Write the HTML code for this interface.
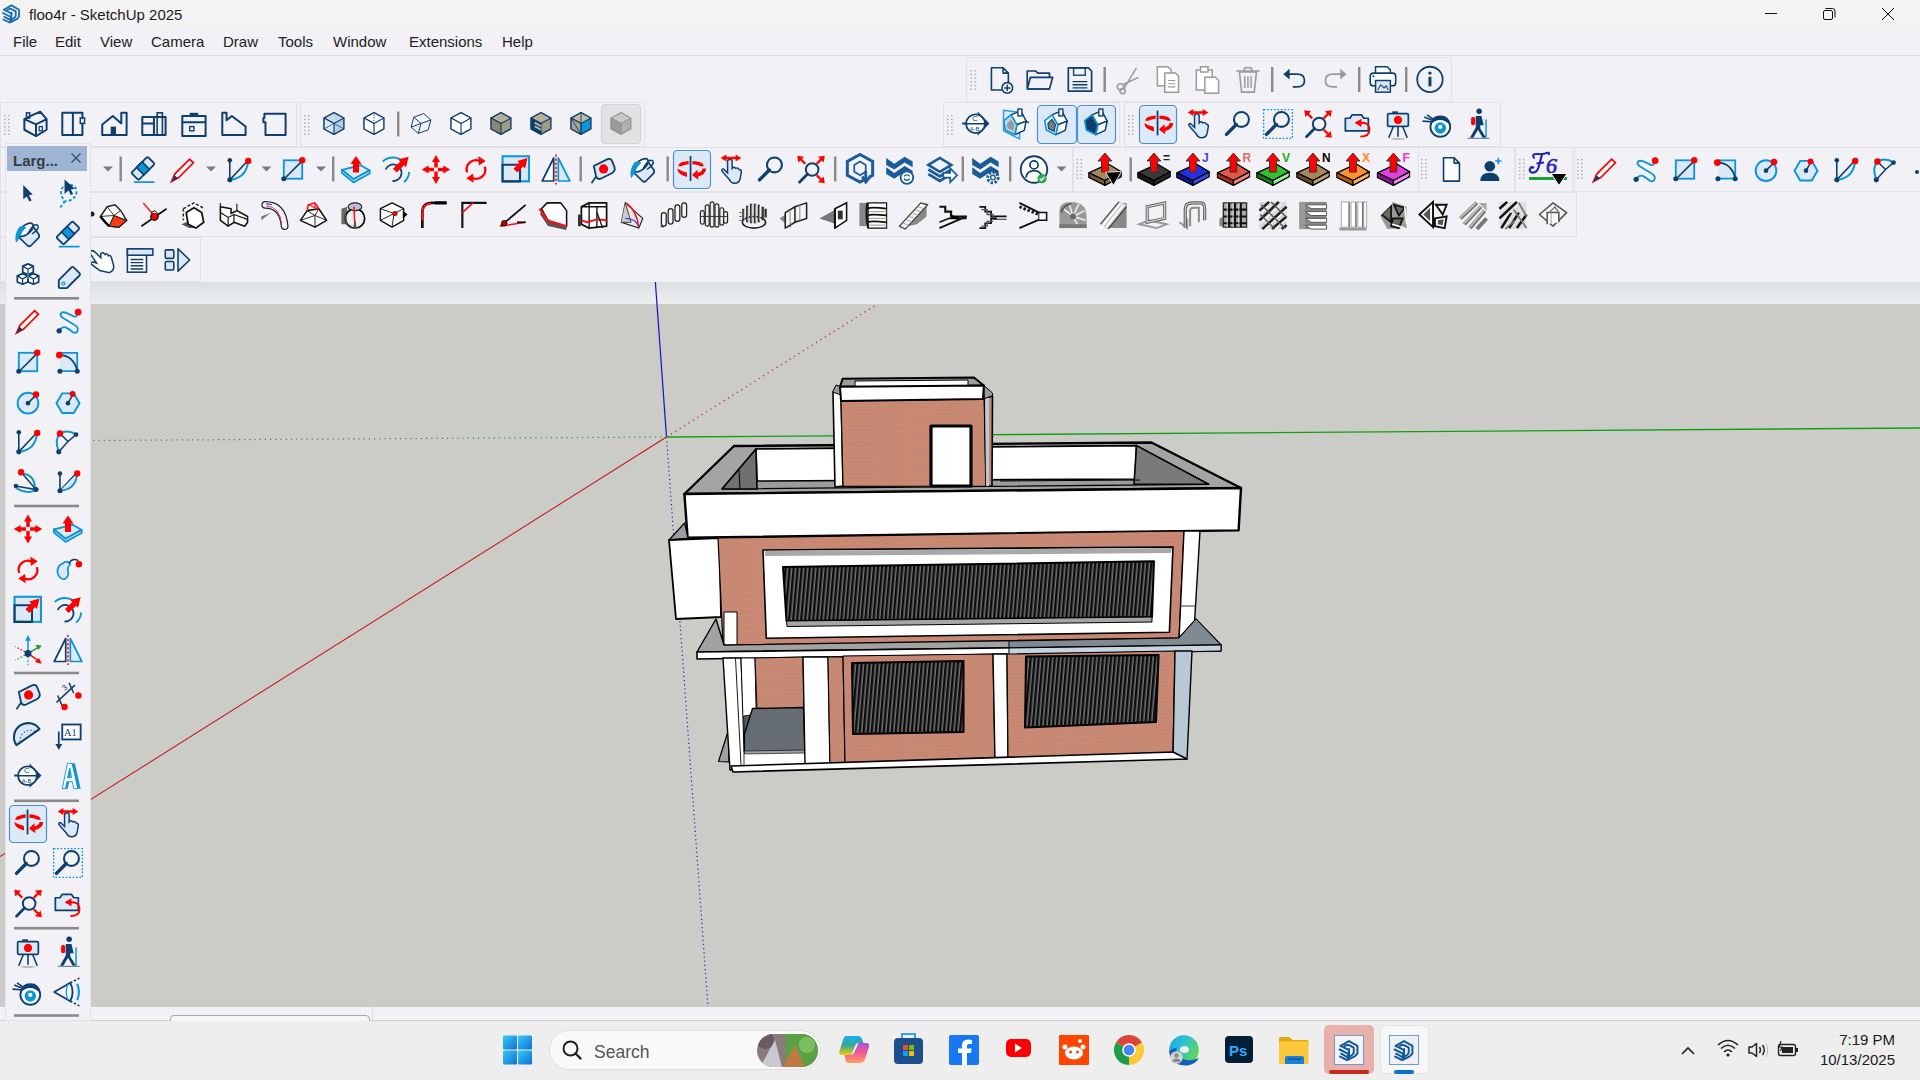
<!DOCTYPE html>
<html><head><meta charset="utf-8">
<style>
html,body{margin:0;padding:0;}
body{width:1920px;height:1080px;overflow:hidden;position:relative;background:#f1f1f6;font-family:"Liberation Sans",sans-serif;}
.abs{position:absolute;}
#title{left:0;top:0;width:1920px;height:29px;background:#f3f3f3;}
#title .t{left:29px;top:6px;font-size:15px;color:#1b1b1b;white-space:nowrap;}
#menu{left:0;top:29px;width:1920px;height:26px;background:#f1f1f6;border-bottom:1px solid #dcdce2;}
#menu span{position:absolute;top:4px;font-size:15px;color:#222;white-space:nowrap;}
#vp{left:0;top:282px;width:1920px;height:725px;background:#cbccc7;}
#vpgrad{left:0;top:282px;width:1920px;height:22px;background:linear-gradient(#dde0e2,#eceef0);}
#status{left:0;top:1007px;width:1920px;height:13px;background:#f1f1f6;border-bottom:1px solid #cfcfd2;}
#taskbar{left:0;top:1021px;width:1920px;height:59px;background:#eeeeee;}
svg{overflow:visible}
</style></head>
<body>
<div id="title" class="abs"><div class="abs t">floo4r - SketchUp 2025</div></div>
<div id="menu" class="abs">
<span style="left:13px">File</span><span style="left:55px">Edit</span><span style="left:100px">View</span><span style="left:151px">Camera</span><span style="left:223px">Draw</span><span style="left:278px">Tools</span><span style="left:333px">Window</span><span style="left:409px">Extensions</span><span style="left:502px">Help</span>
</div>
<div id="vp" class="abs"></div>
<div id="vpgrad" class="abs"></div>
<div id="status" class="abs"></div>
<div id="taskbar" class="abs"></div>
<svg class="abs" style="left:0;top:0" width="1920" height="1080" viewBox="0 0 1920 1080">
<defs><symbol id="i_arc" viewBox="0 0 32 32"><line x1="8" y1="8" x2="8" y2="25" stroke="#0f3f6f" stroke-width="1.4"/><line x1="8" y1="25" x2="23" y2="9" stroke="#0f3f6f" stroke-width="1.4"/><path d="M8 25 Q22 24 24 9" fill="none" stroke="#0c96d8" stroke-width="1.7"/><circle cx="8" cy="8" r="2" fill="#0f3f6f"/><circle cx="8" cy="25" r="2.2" fill="#0f3f6f"/><circle cx="24" cy="8.5" r="2.8" fill="#ff0000"/></symbol><symbol id="i_arc2" viewBox="0 0 32 32"><path d="M9 9 L9 24 L23 9" fill="none" stroke="#0f3f6f" stroke-width="1.4"/><path d="M9 24 Q23 23 24 9" fill="#dbe8f5" stroke="#0c96d8" stroke-width="1.7"/><circle cx="9" cy="9" r="2" fill="#0f3f6f"/><circle cx="9" cy="24" r="2.2" fill="#0f3f6f"/><circle cx="24" cy="9" r="2.8" fill="#ff0000"/></symbol><symbol id="i_arc3" viewBox="0 0 32 32"><path d="M8 25 Q4 14 9 9 Q16 5 23 10" fill="none" stroke="#0c96d8" stroke-width="1.7"/><path d="M8 25 L16 16 L23 10 M16 16 L9 9" fill="none" stroke="#0f3f6f" stroke-width="1.3"/><circle cx="8" cy="25" r="2.2" fill="#0f3f6f"/><circle cx="23" cy="10" r="2" fill="#0f3f6f"/><circle cx="9" cy="9" r="2.8" fill="#ff0000"/></symbol><symbol id="i_axes" viewBox="0 0 32 32"><line x1="16" y1="19" x2="16" y2="5" stroke="#0c96d8" stroke-width="1.3"/><path d="M16 3 L18.5 8 L13.5 8 Z" fill="#0c96d8"/><line x1="16" y1="19" x2="26" y2="13" stroke="#2a9a2a" stroke-width="1.3"/><path d="M28 12 L22.5 11.5 L25 16 Z" fill="#2a9a2a"/><line x1="16" y1="19" x2="26" y2="26" stroke="#ff0000" stroke-width="1.3"/><path d="M28 28 L22 26.5 L25.5 23 Z" fill="#ff0000"/><line x1="16" y1="19" x2="5" y2="13" stroke="#ff0000" stroke-width="1" stroke-dasharray="1.5 1.5"/><line x1="16" y1="19" x2="5" y2="25" stroke="#2a9a2a" stroke-width="1" stroke-dasharray="1.5 1.5"/><line x1="16" y1="19" x2="16" y2="29" stroke="#0c96d8" stroke-width="1" stroke-dasharray="1.5 1.5"/><circle cx="16" cy="19" r="3" fill="#0f3f6f"/></symbol><symbol id="i_circle" viewBox="0 0 32 32"><circle cx="16" cy="17" r="9" fill="#dbe8f5" stroke="#0c96d8" stroke-width="1.7"/><line x1="16" y1="17" x2="23" y2="10" stroke="#0f3f6f" stroke-width="1.3"/><circle cx="16" cy="17" r="2" fill="#0f3f6f"/><circle cx="23" cy="9.5" r="2.8" fill="#ff0000"/></symbol><symbol id="i_component" viewBox="0 0 32 32"><path d="M16 5.9 L20.6 7.832000000000001 L20.6 13.168 L16 15.1 L11.4 13.168 L11.4 7.832000000000001 Z" fill="#ffffff" stroke="#0f3f6f" stroke-width="1.5" stroke-linejoin="round"/><path d="M11.4 7.832000000000001 L16 10.5 L20.6 7.832000000000001 M16 10.5 L16 15.1" fill="none" stroke="#0f3f6f" stroke-width="1.1"/><path d="M11.3 14.4 L15.9 16.332 L15.9 21.668 L11.3 23.6 L6.700000000000001 21.668 L6.700000000000001 16.332 Z" fill="#ffffff" stroke="#0f3f6f" stroke-width="1.5" stroke-linejoin="round"/><path d="M6.700000000000001 16.332 L11.3 19 L15.9 16.332 M11.3 19 L11.3 23.6" fill="none" stroke="#0f3f6f" stroke-width="1.1"/><path d="M20.7 14.4 L25.299999999999997 16.332 L25.299999999999997 21.668 L20.7 23.6 L16.1 21.668 L16.1 16.332 Z" fill="#ffffff" stroke="#0f3f6f" stroke-width="1.5" stroke-linejoin="round"/><path d="M16.1 16.332 L20.7 19 L25.299999999999997 16.332 M20.7 19 L20.7 23.6" fill="none" stroke="#0f3f6f" stroke-width="1.1"/><line x1="16" y1="11" x2="16" y2="19" stroke="#6f8fb0" stroke-width="1.1"/></symbol><symbol id="i_copy" viewBox="0 0 32 32"><path d="M6 4 L16 4 L19 7 L19 22 L6 22 Z" fill="#ffffff" stroke="#9a9a9a" stroke-width="1.4"/><path d="M13 10 L23 10 L26 13 L26 28 L13 28 Z" fill="#ffffff" stroke="#9a9a9a" stroke-width="1.4"/><path d="M16 17 L23 17 M16 20 L23 20 M16 23 L23 23" stroke="#9a9a9a" stroke-width="1"/></symbol><symbol id="i_cut" viewBox="0 0 32 32"><circle cx="9" cy="23" r="3" fill="none" stroke="#9a9a9a" stroke-width="1.4"/><circle cx="11" cy="27" r="2.5" fill="none" stroke="#9a9a9a" stroke-width="1.4"/><path d="M11 21 L26 14 M12 25 L24 5" stroke="#9a9a9a" stroke-width="1.4"/></symbol><symbol id="i_delete" viewBox="0 0 32 32"><path d="M8 9 L24 9 L22 28 L10 28 Z" fill="none" stroke="#9a9a9a" stroke-width="1.5"/><path d="M5 8 L27 8 M12 8 L13 5 L19 5 L20 8 M13 13 L13 24 M16 13 L16 24 M19 13 L19 24" stroke="#9a9a9a" stroke-width="1.4" fill="none"/></symbol><symbol id="i_dimension" viewBox="0 0 32 32"><path d="M6 22 L22 7" stroke="#0f3f6f" stroke-width="1.3"/><path d="M7 16 L11 25 M17 5 L21 14" stroke="#0f3f6f" stroke-width="1.3"/><text x="12" y="12" font-size="7" fill="#0f3f6f" font-family="Liberation Mono" transform="rotate(-40 13 11)">3</text><circle cx="25" cy="16" r="2.8" fill="#ff0000"/><circle cx="13" cy="26" r="2.8" fill="#ff0000"/></symbol><symbol id="i_eraser" viewBox="0 0 32 32"><g transform="rotate(-45 16 15)"><rect x="6" y="10.5" width="20" height="9" rx="1.5" fill="#dbe8f5" stroke="#0f3f6f" stroke-width="1.6"/><rect x="12.5" y="10.5" width="7" height="9" fill="#0c96d8" stroke="#0f3f6f" stroke-width="1.4"/></g><line x1="8" y1="27" x2="26" y2="27" stroke="#0c96d8" stroke-width="1.5"/></symbol><symbol id="i_flip" viewBox="0 0 32 32"><path d="M14 6 L14 26 L4 26 Z" fill="#ffffff" stroke="#0f3f6f" stroke-width="1.5" stroke-linejoin="round"/><path d="M18 6 L28 26 L18 26 Z" fill="#dbe8f5" stroke="#0c96d8" stroke-width="1.5" stroke-linejoin="round"/><line x1="16" y1="3" x2="16" y2="29" stroke="#ff0000" stroke-width="1.3" stroke-dasharray="2 1.5"/></symbol><symbol id="i_followme" viewBox="0 0 32 32"><path d="M12 10 Q6 12 7 19 Q9 24 13 24 Q17 22 16 17 Q15 14 18 11 Q15 7 12 10 Z" fill="#dbe8f5" stroke="#0c96d8" stroke-width="1.5"/><path d="M17 10 Q20 5 25 8" fill="none" stroke="#0f3f6f" stroke-width="1.4"/><circle cx="25.5" cy="11" r="2.8" fill="#ff0000"/></symbol><symbol id="i_fov" viewBox="0 0 32 32"><path d="M4 16 L18 8 Q22 16 18 24 Z" fill="none" stroke="#0f3f6f" stroke-width="1.6" stroke-linejoin="round"/><path d="M16 9 Q13 16 16 23" fill="none" stroke="#0c96d8" stroke-width="1"/><path d="M18 8 L26 4 M18 24 L26 28" stroke="#0f3f6f" stroke-width="1.3" stroke-dasharray="2 1.5"/><path d="M24 9 Q27 16 24 23" fill="none" stroke="#0c96d8" stroke-width="1.8"/></symbol><symbol id="i_freehand" viewBox="0 0 32 32"><path d="M8.5 24 Q11 20.5 14 21.5 Q17 23 20 25.5 Q23.5 27.5 24.5 24 Q25 21 21 19 L13.5 14.5 Q9 12 9.5 10 Q10.5 7.5 14.5 9 Q18 10.5 21 12 Q23.5 13 24.5 9.5" fill="none" stroke="#0c96d8" stroke-width="1.6"/><circle cx="8.3" cy="24.5" r="2.3" fill="#0f3f6f"/><circle cx="24.8" cy="8.3" r="2.9" fill="#ff0000"/></symbol><symbol id="i_hand" viewBox="0 0 32 32"><path d="M4 8 Q6 6 9 9 L14 14 L14 10 Q16 8 18 11 Q20 9 21 12 Q23 11 24 14 L26 21 Q27 26 22 28 L13 26 L5 20 Q4 18 7 18 L10 19 L4 10 Z" fill="#ffffff" stroke="#0f3f6f" stroke-width="1.4"/></symbol><symbol id="i_info" viewBox="0 0 32 32"><circle cx="16" cy="16" r="12" fill="none" stroke="#0f3f6f" stroke-width="1.7"/><circle cx="16" cy="10" r="1.6" fill="#0f3f6f"/><rect x="14.6" y="13.5" width="2.8" height="9" fill="#0f3f6f"/></symbol><symbol id="i_jpp0" viewBox="0 0 32 32"><path d="M0.8 19.3 L19.2 10.8 L31.4 18.3 L16 26.4 Z" fill="#a88a5a" stroke="#000" stroke-width="1.2" stroke-linejoin="round"/><path d="M0.8 19.3 L0.8 23.5 L16 31 L16 26.4 Z" fill="#7a5a30" stroke="#000" stroke-width="1.2" stroke-linejoin="round"/><path d="M16 26.4 L16 31 L31.4 22.8 L31.4 18.3 Z" fill="#8d6c3e" stroke="#000" stroke-width="1.2" stroke-linejoin="round"/><path d="M16 0.5 L22.5 8 L19.2 8 L19.2 18.5 L12.8 18.5 L12.8 8 L9.5 8 Z" fill="#ff0000" stroke="#333" stroke-width="0.9" stroke-linejoin="round"/><path d="M16.5 18.6 L31.5 18 L24 31 Z" fill="#000" stroke="#fff" stroke-width="0.8"/></symbol><symbol id="i_jpp1" viewBox="0 0 32 32"><path d="M0.8 19.3 L19.2 10.8 L31.4 18.3 L16 26.4 Z" fill="#3a3a3a" stroke="#000" stroke-width="1.2" stroke-linejoin="round"/><path d="M0.8 19.3 L0.8 23.5 L16 31 L16 26.4 Z" fill="#1a1a1a" stroke="#000" stroke-width="1.2" stroke-linejoin="round"/><path d="M16 26.4 L16 31 L31.4 22.8 L31.4 18.3 Z" fill="#262626" stroke="#000" stroke-width="1.2" stroke-linejoin="round"/><path d="M16 0.5 L22.5 8 L19.2 8 L19.2 18.5 L12.8 18.5 L12.8 8 L9.5 8 Z" fill="#ff0000" stroke="#333" stroke-width="0.9" stroke-linejoin="round"/><text x="24.5" y="8.5" font-size="11.5" font-weight="bold" fill="#222" font-family="Liberation Sans">=</text></symbol><symbol id="i_jpp2" viewBox="0 0 32 32"><path d="M0.8 19.3 L19.2 10.8 L31.4 18.3 L16 26.4 Z" fill="#2232e0" stroke="#000" stroke-width="1.2" stroke-linejoin="round"/><path d="M0.8 19.3 L0.8 23.5 L16 31 L16 26.4 Z" fill="#0a1890" stroke="#000" stroke-width="1.2" stroke-linejoin="round"/><path d="M16 26.4 L16 31 L31.4 22.8 L31.4 18.3 Z" fill="#3a48f0" stroke="#000" stroke-width="1.2" stroke-linejoin="round"/><path d="M16 0.5 L22.5 8 L19.2 8 L19.2 18.5 L12.8 18.5 L12.8 8 L9.5 8 Z" fill="#ff0000" stroke="#333" stroke-width="0.9" stroke-linejoin="round"/><text x="24.5" y="8.5" font-size="11.5" font-weight="bold" fill="#4646e6" font-family="Liberation Sans">J</text></symbol><symbol id="i_jpp3" viewBox="0 0 32 32"><path d="M0.8 19.3 L19.2 10.8 L31.4 18.3 L16 26.4 Z" fill="#e05848" stroke="#000" stroke-width="1.2" stroke-linejoin="round"/><path d="M0.8 19.3 L0.8 23.5 L16 31 L16 26.4 Z" fill="#b02a20" stroke="#000" stroke-width="1.2" stroke-linejoin="round"/><path d="M16 26.4 L16 31 L31.4 22.8 L31.4 18.3 Z" fill="#f08878" stroke="#000" stroke-width="1.2" stroke-linejoin="round"/><path d="M16 0.5 L22.5 8 L19.2 8 L19.2 18.5 L12.8 18.5 L12.8 8 L9.5 8 Z" fill="#ff0000" stroke="#333" stroke-width="0.9" stroke-linejoin="round"/><text x="24.5" y="8.5" font-size="11.5" font-weight="bold" fill="#e86a5a" font-family="Liberation Sans">R</text></symbol><symbol id="i_jpp4" viewBox="0 0 32 32"><path d="M0.8 19.3 L19.2 10.8 L31.4 18.3 L16 26.4 Z" fill="#30c030" stroke="#000" stroke-width="1.2" stroke-linejoin="round"/><path d="M0.8 19.3 L0.8 23.5 L16 31 L16 26.4 Z" fill="#108010" stroke="#000" stroke-width="1.2" stroke-linejoin="round"/><path d="M16 26.4 L16 31 L31.4 22.8 L31.4 18.3 Z" fill="#a0f0a0" stroke="#000" stroke-width="1.2" stroke-linejoin="round"/><path d="M16 0.5 L22.5 8 L19.2 8 L19.2 18.5 L12.8 18.5 L12.8 8 L9.5 8 Z" fill="#ff0000" stroke="#333" stroke-width="0.9" stroke-linejoin="round"/><text x="24.5" y="8.5" font-size="11.5" font-weight="bold" fill="#22aa22" font-family="Liberation Sans">V</text></symbol><symbol id="i_jpp5" viewBox="0 0 32 32"><path d="M0.8 19.3 L19.2 10.8 L31.4 18.3 L16 26.4 Z" fill="#a88858" stroke="#000" stroke-width="1.2" stroke-linejoin="round"/><path d="M0.8 19.3 L0.8 23.5 L16 31 L16 26.4 Z" fill="#6a4a20" stroke="#000" stroke-width="1.2" stroke-linejoin="round"/><path d="M16 26.4 L16 31 L31.4 22.8 L31.4 18.3 Z" fill="#c0a070" stroke="#000" stroke-width="1.2" stroke-linejoin="round"/><path d="M16 0.5 L22.5 8 L19.2 8 L19.2 18.5 L12.8 18.5 L12.8 8 L9.5 8 Z" fill="#ff0000" stroke="#333" stroke-width="0.9" stroke-linejoin="round"/><text x="24.5" y="8.5" font-size="11.5" font-weight="bold" fill="#000" font-family="Liberation Sans">N</text></symbol><symbol id="i_jpp6" viewBox="0 0 32 32"><path d="M0.8 19.3 L19.2 10.8 L31.4 18.3 L16 26.4 Z" fill="#ff9030" stroke="#000" stroke-width="1.2" stroke-linejoin="round"/><path d="M0.8 19.3 L0.8 23.5 L16 31 L16 26.4 Z" fill="#c05a00" stroke="#000" stroke-width="1.2" stroke-linejoin="round"/><path d="M16 26.4 L16 31 L31.4 22.8 L31.4 18.3 Z" fill="#ffb060" stroke="#000" stroke-width="1.2" stroke-linejoin="round"/><path d="M16 0.5 L22.5 8 L19.2 8 L19.2 18.5 L12.8 18.5 L12.8 8 L9.5 8 Z" fill="#ff0000" stroke="#333" stroke-width="0.9" stroke-linejoin="round"/><text x="24.5" y="8.5" font-size="11.5" font-weight="bold" fill="#ff8a20" font-family="Liberation Sans">X</text></symbol><symbol id="i_jpp7" viewBox="0 0 32 32"><path d="M0.8 19.3 L19.2 10.8 L31.4 18.3 L16 26.4 Z" fill="#e040e0" stroke="#000" stroke-width="1.2" stroke-linejoin="round"/><path d="M0.8 19.3 L0.8 23.5 L16 31 L16 26.4 Z" fill="#9a109a" stroke="#000" stroke-width="1.2" stroke-linejoin="round"/><path d="M16 26.4 L16 31 L31.4 22.8 L31.4 18.3 Z" fill="#f888f8" stroke="#000" stroke-width="1.2" stroke-linejoin="round"/><path d="M16 0.5 L22.5 8 L19.2 8 L19.2 18.5 L12.8 18.5 L12.8 8 L9.5 8 Z" fill="#ff0000" stroke="#333" stroke-width="0.9" stroke-linejoin="round"/><text x="24.5" y="8.5" font-size="11.5" font-weight="bold" fill="#ee30ee" font-family="Liberation Sans">F</text></symbol><symbol id="i_lasso" viewBox="0 0 32 32"><path d="M9 27 C13 25 13 22 12 20 C9 16 9 10 14 8 C20 6 25 10 23 16 C21 21 16 22 12 22" fill="none" stroke="#0c96d8" stroke-width="1.6" stroke-dasharray="2.6 1.8"/><path d="M13 3 L22 11 L18.5 11.6 L20.5 15.6 L18.5 16.6 L16.5 12.6 L13 15.5 Z" fill="#0f3f6f"/></symbol><symbol id="i_lookaround" viewBox="0 0 32 32"><circle cx="18" cy="18.5" r="8.6" fill="#ffffff" stroke="#0f3f6f" stroke-width="1.6"/><path d="M9 17 Q10 8.5 18 8.5 Q26 8.5 27 17 Q22 12.5 18 12.5 Q13 12.5 9 17 Z" fill="#0f3f6f"/><circle cx="18" cy="19.5" r="5" fill="#0c96d8"/><circle cx="18" cy="18.5" r="1.8" fill="#ffffff"/><path d="M2.5 13.5 L10 14 M4 10 L10.5 12.5 M6.5 8 L11.5 11.5" stroke="#0f3f6f" stroke-width="1.4"/></symbol><symbol id="i_move" viewBox="0 0 32 32"><path d="M17.50 14.20 L17.50 9.40 L19.50 9.40 L16.00 3.40 L12.50 9.40 L14.50 9.40 L14.50 14.20 Z" fill="#ff0000"/><path d="M14.50 17.80 L14.50 22.60 L12.50 22.60 L16.00 28.60 L19.50 22.60 L17.50 22.60 L17.50 17.80 Z" fill="#ff0000"/><path d="M14.20 14.50 L9.60 14.50 L9.60 12.50 L3.60 16.00 L9.60 19.50 L9.60 17.50 L14.20 17.50 Z" fill="#ff0000"/><path d="M17.80 17.50 L22.40 17.50 L22.40 19.50 L28.40 16.00 L22.40 12.50 L22.40 14.50 L17.80 14.50 Z" fill="#ff0000"/></symbol><symbol id="i_new" viewBox="0 0 32 32"><path d="M7 5 L18 5 L23 10 L23 26 L7 26 Z M18 5 L18 10 L23 10" fill="none" stroke="#0f3f6f" stroke-width="1.5" stroke-linejoin="round"/><circle cx="22" cy="24" r="5" fill="#ffffff" stroke="#0f3f6f" stroke-width="1.5"/><path d="M22 21 L22 27 M19 24 L25 24" stroke="#0f3f6f" stroke-width="1.5"/></symbol><symbol id="i_offset" viewBox="0 0 32 32"><path d="M7 16 A7.2 7.2 0 1 1 13 26" fill="none" stroke="#0f3f6f" stroke-width="1.6" transform="rotate(0)"/><path d="M4.5 9 A13.6 13.6 0 0 1 25 12 M27.5 18 A13.6 13.6 0 0 1 23 27" fill="none" stroke="#0c96d8" stroke-width="1.6"/><path d="M16.63 18.63 L22.97 12.28 L24.70 14.02 L27.00 5.00 L17.98 7.30 L19.72 9.03 L13.37 15.37 Z" fill="#ff0000"/></symbol><symbol id="i_open" viewBox="0 0 32 32"><path d="M4 25 L4 8 L12 8 L14 10 L25 10 L25 14 M4 25 L7 14 L28 14 L25 25 Z" fill="none" stroke="#0f3f6f" stroke-width="1.6" stroke-linejoin="round"/><path d="M5 25 L25 25" stroke="#0f3f6f" stroke-width="1.6"/></symbol><symbol id="i_orbit" viewBox="0 0 32 32"><path d="M6.4 13.2 A9.6 3.2 0 0 1 25.6 13.2" fill="none" stroke="#ff0000" stroke-width="3"/><path d="M4.2 15.2 L4.6 17.5 Q6 20.5 12.6 22.6 L12.4 18.6 Q7 17.4 4.2 15.2 Z" fill="#ff0000"/><path d="M27.6 15.2 Q27.6 19.6 20.5 21" fill="none" stroke="#ff0000" stroke-width="3.2"/><path d="M21.6 16.2 L16.6 20.8 L22.4 25 Z" fill="#ff0000"/><line x1="15.6" y1="4.8" x2="15.6" y2="25.3" stroke="#dceaf8" stroke-width="3.2"/><line x1="15.6" y1="4.8" x2="15.6" y2="25.3" stroke="#0f3f6f" stroke-width="1.5" stroke-linecap="round"/></symbol><symbol id="i_outliner" viewBox="0 0 32 32"><rect x="7" y="6" width="18" height="22" fill="#ffffff" stroke="#0f3f6f" stroke-width="1.5"/><rect x="7" y="6" width="24" height="6" fill="#dbe8f5" stroke="#0f3f6f" stroke-width="1.5"/><path d="M10 16 L22 16 M10 19 L22 19 M10 22 L22 22 M10 25 L22 25" stroke="#0f3f6f" stroke-width="1.3"/></symbol><symbol id="i_page" viewBox="0 0 32 32"><path d="M9 5 L19 5 L24 10 L24 27 L9 27 Z M19 5 L19 10 L24 10" fill="#ffffff" stroke="#0f3f6f" stroke-width="1.5" stroke-linejoin="round"/></symbol><symbol id="i_paint" viewBox="0 0 32 32"><path d="M8 15 Q6.5 17 8 18.8 L15.5 26 Q17 27.3 18.6 26 L25 19.6 Q26.4 18 25.3 16.2 L20.5 9.5" fill="#dbe8f5" stroke="#0f3f6f" stroke-width="1.5" stroke-linejoin="round"/><ellipse cx="14.2" cy="12.3" rx="7.6" ry="3.9" transform="rotate(-40 14.2 12.3)" fill="#ffffff" stroke="#0f3f6f" stroke-width="1.5"/><path d="M16 15.5 Q21 6 24.5 8.5 Q26.5 11 19.5 16" fill="none" stroke="#0f3f6f" stroke-width="1.3"/><path d="M8.6 9.6 Q3.6 16.5 5.6 23.5 Q7.8 21.5 9.3 17.6 Q10.8 13.6 14.6 10.2 Q11 8.5 8.6 9.6 Z" fill="#0c96d8"/></symbol><symbol id="i_pan" viewBox="0 0 32 32"><path d="M14 24 Q10 20 8 17 Q8 15 10 16 L13 19 L13 9 Q13 7 15 7 Q17 7 17 9 L17 15 Q19 13 20 15 Q22 14 23 16 Q25 16 25 18 L24 24 Q23 28 19 28 Q16 28 14 24 Z" fill="#dbe8f5" stroke="#0f3f6f" stroke-width="1.3"/><path d="M7 6 L12 3 L12 9 Z M25 6 L20 3 L20 9 Z" fill="#ff0000"/><line x1="10" y1="6" x2="22" y2="6" stroke="#ff0000" stroke-width="2"/></symbol><symbol id="i_paste" viewBox="0 0 32 32"><path d="M6 7 L21 7 L21 26 L6 26 Z" fill="#ffffff" stroke="#9a9a9a" stroke-width="1.4"/><rect x="10" y="4" width="7" height="5" fill="#ffffff" stroke="#9a9a9a" stroke-width="1.4"/><path d="M14 14 L24 14 L27 17 L27 29 L14 29 Z" fill="#ffffff" stroke="#9a9a9a" stroke-width="1.4"/></symbol><symbol id="i_pencil" viewBox="0 0 32 32"><path d="M6 26.5 L9 19.8 L21.8 7 L25 10.2 L12.2 23 Z" fill="#ffffff" stroke="#ff0000" stroke-width="1.5" stroke-linejoin="miter"/><path d="M6 26.5 L8.6 20.8 L11.7 23.9 Z" fill="#0f3f6f"/></symbol><symbol id="i_person" viewBox="0 0 32 32"><circle cx="14" cy="13" r="5" fill="#0f3f6f"/><path d="M5 27 Q5 19 14 19 Q23 19 23 27 Z" fill="#0f3f6f"/><path d="M22 5 L22 11 M19 8 L25 8" stroke="#0c96d8" stroke-width="1.5"/></symbol><symbol id="i_pie" viewBox="0 0 32 32"><path d="M9 9 Q22 9 22 22" fill="none" stroke="#0c96d8" stroke-width="1.7"/><path d="M5 20 L23 23 L11 9" fill="none" stroke="#0f3f6f" stroke-width="1.3"/><path d="M6 22 Q14 27 22 24" fill="none" stroke="#0c96d8" stroke-width="1.7"/><circle cx="5.5" cy="20" r="2" fill="#0f3f6f"/><circle cx="23" cy="23" r="2.2" fill="#0f3f6f"/><circle cx="10" cy="8" r="2.8" fill="#ff0000"/></symbol><symbol id="i_polygon" viewBox="0 0 32 32"><path d="M11 8.5 L21 8.5 L26 17 L21 25.5 L11 25.5 L6 17 Z" fill="#dbe8f5" stroke="#0c96d8" stroke-width="1.7"/><line x1="16" y1="17" x2="20" y2="10" stroke="#0f3f6f" stroke-width="1.3"/><circle cx="16" cy="17" r="2" fill="#0f3f6f"/><circle cx="20" cy="9" r="2.6" fill="#ff0000"/></symbol><symbol id="i_poscam" viewBox="0 0 32 32"><rect x="7" y="7" width="18" height="11" rx="1" fill="#dbe8f5" stroke="#0f3f6f" stroke-width="1.5"/><rect x="11" y="5" width="5" height="2" fill="#0f3f6f"/><path d="M12 18 L8 28 M16 18 L16 27 M20 18 L24 28" stroke="#0f3f6f" stroke-width="1.4"/><ellipse cx="16" cy="29" rx="6" ry="1" fill="#bbb"/><circle cx="16" cy="12.5" r="3.6" fill="#ff0000"/></symbol><symbol id="i_prev" viewBox="0 0 32 32"><path d="M5 11 L9 11 L11 8 L19 8 L21 11 L25 11 L25 22 L5 22 Z" fill="#dbe8f5" stroke="#0f3f6f" stroke-width="1.5" stroke-linejoin="round"/><path d="M17 15 Q26 14 26 21 Q26 27 18 27" fill="none" stroke="#ff0000" stroke-width="1.6"/><path d="M13 15 L19 11.5 L19 18.5 Z" fill="#ff0000"/></symbol><symbol id="i_print" viewBox="0 0 32 32"><path d="M9 10 L9 4 L20 4 L23 7 L23 10" fill="#ffffff" stroke="#0f3f6f" stroke-width="1.4"/><rect x="4" y="10" width="24" height="12" rx="3" fill="#ffffff" stroke="#0f3f6f" stroke-width="1.5"/><rect x="9" y="17" width="14" height="11" fill="#dbe8f5" stroke="#0f3f6f" stroke-width="1.4"/><path d="M11 26 L14 21 L17 24 L19 22 L21 26" fill="none" stroke="#0f3f6f" stroke-width="1"/><circle cx="7" cy="13" r="1" fill="#0f3f6f"/></symbol><symbol id="i_profile" viewBox="0 0 32 32"><circle cx="16" cy="16" r="11.5" fill="#ffffff" stroke="#0f3f6f" stroke-width="1.6"/><circle cx="16" cy="12" r="3.5" fill="none" stroke="#0f3f6f" stroke-width="1.5"/><path d="M9 23 Q10 17 16 17 Q22 17 23 23" fill="none" stroke="#0f3f6f" stroke-width="1.5"/><circle cx="23" cy="24" r="4" fill="#2aa84a"/><path d="M21 24 L22.5 25.5 L25 22.5" fill="none" stroke="#ffffff" stroke-width="1.2"/></symbol><symbol id="i_protractor" viewBox="0 0 32 32"><path d="M6 24 L26 10 A12 12 0 0 0 6 24 Z" fill="#dbe8f5" stroke="#0f3f6f" stroke-width="1.8" stroke-linejoin="round"/><path d="M9 21 A9 9 0 0 1 22 12" fill="none" stroke="#0f3f6f" stroke-width="1" stroke-dasharray="1 2"/></symbol><symbol id="i_pushpull" viewBox="0 0 32 32"><path d="M3.8 16.3 L20.2 12.3 L27.9 16.8 L13.8 24.5 Z" fill="#dbe8f5" stroke="#0c96d8" stroke-width="1.6" stroke-linejoin="round"/><path d="M3.8 16.3 L3.8 19 L13.8 27.2 L27.9 19.5 L27.9 16.8 L13.8 24.5 Z" fill="#dbe8f5" stroke="#0c96d8" stroke-width="1.6" stroke-linejoin="round"/><path d="M18.60 18.50 L18.60 11.30 L20.75 11.30 L16.00 4.30 L11.25 11.30 L13.40 11.30 L13.40 18.50 Z" fill="#ff0000"/></symbol><symbol id="i_rect" viewBox="0 0 32 32"><rect x="8" y="8" width="16" height="16" fill="#dbe8f5" stroke="#0c96d8" stroke-width="1.6"/><line x1="8.5" y1="24" x2="24" y2="8.5" stroke="#0f3f6f" stroke-width="1.4"/><circle cx="8" cy="24" r="2.2" fill="#0f3f6f"/><circle cx="24" cy="8" r="2.8" fill="#ff0000"/></symbol><symbol id="i_redo" viewBox="0 0 32 32"><path d="M22 11 L14 11 Q7 11 7 17 Q7 23 14 23 L18 23" fill="none" stroke="#9a9a9a" stroke-width="1.6"/><path d="M27 11 L21 6 L21 16 Z" fill="#9a9a9a"/></symbol><symbol id="i_rotate" viewBox="0 0 32 32"><path d="M8.3 18.5 A8 8 0 0 1 19 8.6" fill="none" stroke="#ff0000" stroke-width="2"/><path d="M23.7 13.5 A8 8 0 0 1 13 23.4" fill="none" stroke="#ff0000" stroke-width="2"/><path d="M18 4.5 L24.5 8.5 L18.5 12.5 Z" fill="#ff0000"/><path d="M14 27.5 L7.5 23.5 L13.5 19.5 Z" fill="#ff0000"/></symbol><symbol id="i_rotrect" viewBox="0 0 32 32"><path d="M9 8 L24 8 L24 24 L9 24" fill="#dbe8f5" stroke="#0c96d8" stroke-width="1.6"/><path d="M9 10 Q20 10 24 23" fill="none" stroke="#0f3f6f" stroke-width="1.5"/><circle cx="8.5" cy="10" r="3" fill="#ff0000"/><circle cx="9" cy="24" r="2.2" fill="#0f3f6f"/><circle cx="24" cy="24" r="2.2" fill="#0f3f6f"/></symbol><symbol id="i_s_back" viewBox="0 0 32 32"><path d="M16 4 L27 10 L27 22 L16 28 L5 22 L5 10 Z" fill="#ffffff" stroke="#0f3f6f" stroke-width="1.6" stroke-linejoin="round"/><path d="M5 10 L16 16 L27 10 L16 4 Z" fill="#ffffff" stroke="#0f3f6f" stroke-width="1.2800000000000002" stroke-linejoin="round"/><path d="M5 10 L16 16 L16 28 L5 22 Z" fill="#ffffff" stroke="#0f3f6f" stroke-width="1.2800000000000002" stroke-linejoin="round"/><path d="M16 6 L16 16" stroke="#0f3f6f" stroke-width="1" stroke-dasharray="1.5 1.5"/></symbol><symbol id="i_s_gray" viewBox="0 0 32 32"><path d="M16 4 L27 10 L27 22 L16 28 L5 22 L5 10 Z" fill="#b0b0b0" stroke="#8c8c8c" stroke-width="1.2" stroke-linejoin="round"/><path d="M5 10 L16 16 L27 10 L16 4 Z" fill="#c8c8c8" stroke="#8c8c8c" stroke-width="0.96" stroke-linejoin="round"/><path d="M5 10 L16 16 L16 28 L5 22 Z" fill="#9a9a9a" stroke="#8c8c8c" stroke-width="0.96" stroke-linejoin="round"/></symbol><symbol id="i_s_hidden" viewBox="0 0 32 32"><path d="M16 4 L27 10 L27 22 L16 28 L5 22 L5 10 Z" fill="#ffffff" stroke="#0f3f6f" stroke-width="1.6" stroke-linejoin="round"/><path d="M5 10 L16 16 L27 10 L16 4 Z" fill="#ffffff" stroke="#0f3f6f" stroke-width="1.2800000000000002" stroke-linejoin="round"/><path d="M5 10 L16 16 L16 28 L5 22 Z" fill="#ffffff" stroke="#0f3f6f" stroke-width="1.2800000000000002" stroke-linejoin="round"/></symbol><symbol id="i_s_mono" viewBox="0 0 32 32"><path d="M16 4 L27 10 L27 22 L16 28 L5 22 L5 10 Z" fill="#0c96d8" stroke="#0f3f6f" stroke-width="1.6" stroke-linejoin="round"/><path d="M5 10 L16 16 L27 10 L16 4 Z" fill="#c0bca2" stroke="#0f3f6f" stroke-width="1.2800000000000002" stroke-linejoin="round"/><path d="M5 10 L16 16 L16 28 L5 22 Z" fill="#a9a58c" stroke="#0f3f6f" stroke-width="1.2800000000000002" stroke-linejoin="round"/><path d="M16 4 L16 28 L5 10" fill="none" stroke="#0f3f6f" stroke-width="1"/></symbol><symbol id="i_s_shaded" viewBox="0 0 32 32"><path d="M16 4 L27 10 L27 22 L16 28 L5 22 L5 10 Z" fill="#a09c82" stroke="#0f3f6f" stroke-width="1.6" stroke-linejoin="round"/><path d="M5 10 L16 16 L27 10 L16 4 Z" fill="#b5b09a" stroke="#0f3f6f" stroke-width="1.2800000000000002" stroke-linejoin="round"/><path d="M5 10 L16 16 L16 28 L5 22 Z" fill="#8b876d" stroke="#0f3f6f" stroke-width="1.2800000000000002" stroke-linejoin="round"/></symbol><symbol id="i_s_tex" viewBox="0 0 32 32"><path d="M16 4 L27 10 L27 22 L16 28 L5 22 L5 10 Z" fill="#a09c82" stroke="#0f3f6f" stroke-width="1.6" stroke-linejoin="round"/><path d="M5 10 L16 16 L27 10 L16 4 Z" fill="#b5b09a" stroke="#0f3f6f" stroke-width="1.2800000000000002" stroke-linejoin="round"/><path d="M5 10 L16 16 L16 28 L5 22 Z" fill="#0f3f6f" stroke="#0f3f6f" stroke-width="1.2800000000000002" stroke-linejoin="round"/><path d="M9 15 L16 19 M9 19 L16 23" stroke="#c0bca0" stroke-width="2"/></symbol><symbol id="i_s_wire" viewBox="0 0 32 32"><path d="M8 9 L19 5 L27 12 L24 23 L13 27 L5 20 Z M8 9 L16 16 L27 12 M16 16 L13 27 M5 20 L16 16" fill="none" stroke="#0f3f6f" stroke-width="1.1"/></symbol><symbol id="i_s_xray" viewBox="0 0 32 32"><path d="M16 4 L27 10 L27 22 L16 28 L5 22 L5 10 Z" fill="#b5cde3" stroke="#0f3f6f" stroke-width="1.6" stroke-linejoin="round"/><path d="M5 10 L16 16 L27 10 L16 4 Z" fill="#c5d8ea" stroke="#0f3f6f" stroke-width="1.2800000000000002" stroke-linejoin="round"/><path d="M5 10 L16 16 L16 28 L5 22 Z" fill="#dbe8f5" stroke="#0f3f6f" stroke-width="1.2800000000000002" stroke-linejoin="round"/><path d="M5 22 L16 16 L27 22" fill="none" stroke="#0f3f6f" stroke-width="0.8"/></symbol><symbol id="i_save" viewBox="0 0 32 32"><path d="M5 5 L24 5 L27 8 L27 27 L5 27 Z" fill="none" stroke="#0f3f6f" stroke-width="1.6" stroke-linejoin="round"/><rect x="10" y="5" width="11" height="7" fill="none" stroke="#0f3f6f" stroke-width="1.3"/><path d="M9 18 L23 18 M9 21 L23 21 M9 24 L23 24" stroke="#0f3f6f" stroke-width="1.3"/></symbol><symbol id="i_scale" viewBox="0 0 32 32"><rect x="4.3" y="4.5" width="23" height="21.8" fill="#dbe8f5" stroke="#0c96d8" stroke-width="1.8"/><path d="M4.3 11.8 L19.5 11.8 L19.5 26.3 L4.3 26.3 Z" fill="none" stroke="#0f3f6f" stroke-width="1.8"/><path d="M17.16 18.59 L22.14 13.37 L23.91 15.07 L26.00 6.00 L17.04 8.51 L18.81 10.20 L13.84 15.41 Z" fill="#ff0000"/></symbol><symbol id="i_scenes" viewBox="0 0 32 32"><rect x="5" y="7" width="8" height="8" rx="1" fill="#dbe8f5" stroke="#0f3f6f" stroke-width="1.5"/><rect x="5" y="18" width="8" height="8" rx="1" fill="#dbe8f5" stroke="#0f3f6f" stroke-width="1.5"/><path d="M17 6 L28 16.5 L17 27 Z" fill="#dbe8f5" stroke="#0f3f6f" stroke-width="1.5" stroke-linejoin="round"/></symbol><symbol id="i_sec_cut" viewBox="0 0 32 32"><path d="M12.5 8.1 L21 4.5 L25.7 13.5 L17.6 16.7 Z" fill="#ffffff" stroke="#0f3f6f" stroke-width="1.3" stroke-linejoin="round"/><path d="M17.6 16.7 L25.7 13.5 L24 21.5 L15.8 25.3 Z" fill="#ffffff" stroke="#0f3f6f" stroke-width="1.3" stroke-linejoin="round"/><rect x="18.5" y="3" width="3.5" height="6" fill="#ffffff" stroke="#0f3f6f" stroke-width="1.2"/><path d="M12.5 8.1 L6.2 13 L7.6 21.2 L15.8 25.3 L17.6 16.7 Z" fill="#eef4fa" stroke="#0c96d8" stroke-width="1.4" stroke-linejoin="round"/><path d="M9 15.5 L12.5 12 L15.5 16.5 L14.5 22.5 L9.5 20 Z" fill="#777d84" stroke="#0f3f6f" stroke-width="1"/></symbol><symbol id="i_sec_disp" viewBox="0 0 32 32"><path d="M6 4 L20 6 L20 29 L6 22 Z" fill="#dbe8f5" stroke="#0c96d8" stroke-width="1.2" opacity="0.9"/><path d="M12.5 8.1 L21 4.5 L25.7 13.5 L17.6 16.7 Z" fill="#ffffff" stroke="#0f3f6f" stroke-width="1.3" stroke-linejoin="round"/><path d="M17.6 16.7 L25.7 13.5 L24 21.5 L15.8 25.3 Z" fill="#ffffff" stroke="#0f3f6f" stroke-width="1.3" stroke-linejoin="round"/><rect x="18.5" y="3" width="3.5" height="6" fill="#ffffff" stroke="#0f3f6f" stroke-width="1.2"/><path d="M12.5 8.1 L6.2 13 L7.6 21.2 L15.8 25.3 L17.6 16.7 Z" fill="#c9d3dc" stroke="#0c96d8" stroke-width="1.4" stroke-linejoin="round"/><path d="M9 16 L12.5 12 L15.5 16.5 L14.5 22 L9.5 19.5 Z" fill="#8e99a4"/><path d="M25.7 13.5 L28 15" stroke="#0f3f6f" stroke-width="1.2"/></symbol><symbol id="i_sec_fill" viewBox="0 0 32 32"><path d="M12.5 8.1 L21 4.5 L25.7 13.5 L17.6 16.7 Z" fill="#ffffff" stroke="#0f3f6f" stroke-width="1.3" stroke-linejoin="round"/><path d="M17.6 16.7 L25.7 13.5 L24 21.5 L15.8 25.3 Z" fill="#ffffff" stroke="#0f3f6f" stroke-width="1.3" stroke-linejoin="round"/><rect x="18.5" y="3" width="3.5" height="6" fill="#ffffff" stroke="#0f3f6f" stroke-width="1.2"/><path d="M12.5 8.1 L6.2 13 L7.6 21.2 L15.8 25.3 L17.6 16.7 Z" fill="#0f3f6f" stroke="#0c96d8" stroke-width="1.4" stroke-linejoin="round"/></symbol><symbol id="i_sec_plane" viewBox="0 0 32 32"><path d="M17.4 5.2 L27.7 15.6 L17.4 26.2 Z" fill="#0f3f6f"/><line x1="4" y1="15.6" x2="18" y2="15.6" stroke="#0f3f6f" stroke-width="1.6"/><circle cx="15.6" cy="15.8" r="8.2" fill="#ffffff" stroke="#0f3f6f" stroke-width="1.6"/><line x1="7.4" y1="15.8" x2="23.8" y2="15.8" stroke="#0f3f6f" stroke-width="1.4"/><text x="12.6" y="13.8" font-size="7" fill="#0f3f6f" font-family="Liberation Sans">C</text><text x="10.6" y="22" font-size="5" fill="#0f3f6f" font-family="Liberation Sans">A-B</text></symbol><symbol id="i_section" viewBox="0 0 32 32"><path d="M17.4 5.2 L27.7 15.6 L17.4 26.2 Z" fill="#0f3f6f"/><line x1="4" y1="15.6" x2="18" y2="15.6" stroke="#0f3f6f" stroke-width="1.6"/><circle cx="15.6" cy="15.8" r="8.2" fill="#ffffff" stroke="#0f3f6f" stroke-width="1.6"/><line x1="7.4" y1="15.8" x2="23.8" y2="15.8" stroke="#0f3f6f" stroke-width="1.4"/><text x="12.6" y="13.8" font-size="7" fill="#0f3f6f" font-family="Liberation Sans">C</text><text x="10.6" y="22" font-size="5" fill="#0f3f6f" font-family="Liberation Sans">A-B</text></symbol><symbol id="i_select" viewBox="0 0 32 32"><path d="M11 6 L21 16 L17 16.8 L19.8 22.2 L17.4 23.4 L14.8 18 L11 21 Z" fill="#0f3f6f"/></symbol><symbol id="i_tag" viewBox="0 0 32 32"><path d="M8 20 L19 9 Q20 8 21 9 L26 14 Q27 15 26 16 L15 27 L9 27 Q8 27 8 26 Z" fill="#dbe8f5" stroke="#0f3f6f" stroke-width="1.6" stroke-linejoin="round"/><circle cx="12" cy="23" r="1.3" fill="none" stroke="#0c96d8" stroke-width="1"/></symbol><symbol id="i_tape" viewBox="0 0 32 32"><path d="M8 13 L20 7 Q23 6 24 9 L26 14 Q27 17 24 19 L14 24 Q11 25 10 22 Z" fill="#dbe8f5" stroke="#0f3f6f" stroke-width="1.6" stroke-linejoin="round"/><path d="M10 22 L6 28" stroke="#0f3f6f" stroke-width="1.5"/><circle cx="16.5" cy="15.5" r="4" fill="#ff0000"/></symbol><symbol id="i_text" viewBox="0 0 32 32"><rect x="11" y="6" width="16" height="13" fill="#ffffff" stroke="#0f3f6f" stroke-width="1.6"/><text x="12.5" y="16" font-size="9" fill="#0f3f6f" font-family="Liberation Serif">A1</text><path d="M8 12 L8 27" stroke="#0f3f6f" stroke-width="1.5"/><path d="M5 23 L8 28 L11 23 Z" fill="#0f3f6f"/></symbol><symbol id="i_text3d" viewBox="0 0 32 32"><path d="M13 27 L17.5 5 L22 5 L27 27 L23.2 27 L22 21 L17 21 L15.8 27 Z M17.8 17.5 L21.3 17.5 L19.6 9 Z" fill="#0c96d8"/><path d="M11 27 L15.5 5 L19.5 5 L24.5 27 L21 27 L19.8 21 L15 21 L13.8 27 Z M15.6 17.5 L19.2 17.5 L17.5 9 Z" fill="#ffffff" stroke="#0c96d8" stroke-width="0.8"/></symbol><symbol id="i_undo" viewBox="0 0 32 32"><path d="M10 11 L18 11 Q25 11 25 17 Q25 23 18 23 L14 23" fill="none" stroke="#0f3f6f" stroke-width="1.6"/><path d="M5 11 L11 6 L11 16 Z" fill="#0f3f6f"/></symbol><symbol id="i_v_back" viewBox="0 0 32 32"><path d="M5 8 L27 8 L27 27 L5 27 Z M5 14 L27 14" fill="none" stroke="#0f3f6f" stroke-width="1.9" stroke-linejoin="round"/><rect x="12" y="5" width="8" height="3" fill="#0f3f6f"/><rect x="12" y="18" width="4" height="4" fill="none" stroke="#0f3f6f" stroke-width="1.3"/></symbol><symbol id="i_v_bottom" viewBox="0 0 32 32"><path d="M7 6 L27 6 L27 26 L8 26 L8 14 L6 14 L6 10 L7 10 Z" fill="none" stroke="#0f3f6f" stroke-width="1.9" stroke-linejoin="round"/></symbol><symbol id="i_v_front" viewBox="0 0 32 32"><path d="M4 26 L4 16 L14 8 L22 15 L22 5 L27 5 L27 26 Z" fill="none" stroke="#0f3f6f" stroke-width="1.9" stroke-linejoin="round"/><rect x="12" y="18" width="5" height="8" fill="#0f3f6f"/></symbol><symbol id="i_v_iso" viewBox="0 0 32 32"><path d="M6 11 L14 7 L21 4 L27 11 L27 21 L17 27 L6 21 Z M6 11 L17 16 L27 11 M17 16 L17 27" fill="none" stroke="#0f3f6f" stroke-width="1.9" stroke-linejoin="round"/><rect x="8" y="5" width="3" height="5" fill="none" stroke="#0f3f6f" stroke-width="1.4"/><rect x="20" y="18" width="3" height="4" fill="none" stroke="#0f3f6f" stroke-width="1.2"/></symbol><symbol id="i_v_left" viewBox="0 0 32 32"><path d="M5 26 L5 5 L9 5 L9 12 L14 8 L27 18 L27 26 Z" fill="none" stroke="#0f3f6f" stroke-width="1.9" stroke-linejoin="round"/></symbol><symbol id="i_v_right" viewBox="0 0 32 32"><path d="M5 26 L5 9 L27 9 L27 26 Z M16 9 L16 26 M5 15 L16 15" fill="none" stroke="#0f3f6f" stroke-width="1.9" stroke-linejoin="round"/><rect x="19" y="5" width="5" height="21" fill="none" stroke="#0f3f6f" stroke-width="1.5"/></symbol><symbol id="i_v_top" viewBox="0 0 32 32"><path d="M5 5 L24 5 L24 26 L5 26 Z M15 5 L15 26" fill="none" stroke="#0f3f6f" stroke-width="1.9" stroke-linejoin="round"/><rect x="22" y="10" width="4" height="5" fill="#ffffff" stroke="#0f3f6f" stroke-width="1.5"/></symbol><symbol id="i_walk" viewBox="0 0 32 32"><circle cx="17" cy="5" r="2.4" fill="#0f3f6f"/><path d="M14 9 L19 9 L21 17 L18 17 L18 20 L23 28 L20 28 L16 21 L12 28 L9 28 L14 19 Z" fill="#0f3f6f"/><rect x="10" y="10" width="3.5" height="7" rx="1.5" fill="#ff0000"/><line x1="23" y1="12" x2="23" y2="28" stroke="#0c96d8" stroke-width="1.3"/><line x1="7" y1="28.5" x2="26" y2="28.5" stroke="#6b8bab" stroke-width="1.2"/></symbol><symbol id="i_wh1" viewBox="0 0 32 32"><path d="M16 3 L27 9 L27 21 L16 27 L5 21 L5 9 Z" fill="none" stroke="#1a5c9a" stroke-width="2.6"/><path d="M16 9 L21 12 L21 18 L16 21 L11 18 L11 12 Z" fill="none" stroke="#1a5c9a" stroke-width="1.5"/><path d="M21 17 L21 25 M18 22 L21 27 L25 22" fill="#ffffff" stroke="#1a5c9a" stroke-width="2.4"/></symbol><symbol id="i_wh2" viewBox="0 0 32 32"><path d="M4 6 L11 11 L20 5 L27 9 L27 14 L20 10 L11 16 L4 12 Z M4 14 L11 19 L20 13 L27 17 L27 22 L20 18 L11 24 L4 20 Z" fill="#1a5c9a"/><circle cx="22" cy="23" r="5.5" fill="#ffffff" stroke="#1a5c9a" stroke-width="1.6"/><path d="M19.5 22 A3 3 0 0 1 24.5 22 M24.5 24 A3 3 0 0 1 19.5 24" fill="none" stroke="#1a5c9a" stroke-width="1.2"/></symbol><symbol id="i_wh3" viewBox="0 0 32 32"><path d="M5 12 L15 6 L25 12 L15 18 Z" fill="none" stroke="#1a5c9a" stroke-width="2.2"/><path d="M5 16 L15 22 L25 16 M5 20 L15 26 L25 20" fill="none" stroke="#1a5c9a" stroke-width="2.4"/><path d="M18 19 L24 19 L24 15 L30 21 L24 27 L24 23 L18 23 Z" fill="#ffffff" stroke="#1a5c9a" stroke-width="1.5"/></symbol><symbol id="i_wh4" viewBox="0 0 32 32"><path d="M4 6 L11 11 L20 5 L27 9 L27 14 L20 10 L11 16 L4 12 Z M4 14 L11 19 L20 13 L27 17 L27 22 L20 18 L11 24 L4 20 Z" fill="#1a5c9a"/><circle cx="22" cy="23" r="4.5" fill="#ffffff" stroke="#1a5c9a" stroke-width="2.6" stroke-dasharray="2 1.4"/><circle cx="22" cy="23" r="2" fill="#ffffff" stroke="#1a5c9a" stroke-width="1.2"/></symbol><symbol id="i_zoom" viewBox="0 0 32 32"><circle cx="19" cy="12" r="6.5" fill="none" stroke="#0f3f6f" stroke-width="1.8"/><line x1="14.5" y1="16.5" x2="6" y2="25" stroke="#0f3f6f" stroke-width="3" stroke-linecap="round"/></symbol><symbol id="i_zoomext" viewBox="0 0 32 32"><circle cx="17" cy="16" r="5.5" fill="none" stroke="#0f3f6f" stroke-width="1.7"/><line x1="13" y1="20" x2="6" y2="27" stroke="#0f3f6f" stroke-width="2.4" stroke-linecap="round"/><g fill="#ff0000"><path d="M4 4 L10 5 L5 10 Z"/><path d="M28 4 L22 5 L27 10 Z"/><path d="M28 28 L22 27 L27 22 Z"/></g><path d="M6 6 L11 11 M26 6 L21 11 M26 26 L21 21" stroke="#ff0000" stroke-width="2"/></symbol><symbol id="i_zoomwin" viewBox="0 0 32 32"><circle cx="19" cy="12" r="6.5" fill="none" stroke="#0f3f6f" stroke-width="1.8"/><line x1="14.5" y1="16.5" x2="6" y2="25" stroke="#0f3f6f" stroke-width="3" stroke-linecap="round"/><rect x="3.5" y="3.5" width="25" height="25" fill="none" stroke="#0c96d8" stroke-width="1.2" stroke-dasharray="1.5 1.5"/></symbol><linearGradient id="winblue" x1="0" y1="0" x2="1" y2="1"><stop offset="0" stop-color="#3ccaf7"/><stop offset="1" stop-color="#0a6fd6"/></linearGradient><linearGradient id="cop1" x1="0" y1="0" x2="0" y2="1"><stop offset="0" stop-color="#1ab0f5"/><stop offset="0.5" stop-color="#3aa88a"/><stop offset="1" stop-color="#f0cc10"/></linearGradient><linearGradient id="cop2" x1="0" y1="0" x2="0" y2="1"><stop offset="0" stop-color="#b050e0"/><stop offset="0.5" stop-color="#f05a90"/><stop offset="1" stop-color="#fca060"/></linearGradient><linearGradient id="edgeg" x1="0" y1="0" x2="1" y2="0.6"><stop offset="0" stop-color="#1c9ae8"/><stop offset="0.45" stop-color="#2cc0d8"/><stop offset="1" stop-color="#60d850"/></linearGradient><linearGradient id="skyg" x1="0" y1="0" x2="0" y2="1"><stop offset="0" stop-color="#dde0e2"/><stop offset="1" stop-color="#eceef0"/></linearGradient></defs>
<g transform="translate(1.5 3.5) scale(0.95)" fill="none" stroke="#1a6db0" stroke-width="1.9" stroke-linejoin="round" stroke-linecap="round"><path d="M2.5 6.5 L10.5 2 L18.5 6.5 L18.5 13.5 Q18 15 16 16.5 L11 19"/><path d="M6.5 6.8 Q8 5.2 11 6 L15 8.3 L15 13 Q14.5 14.5 13 15.5 L11 16.5"/><path d="M1.5 10 L9.5 14 L9.5 19.5 M10.5 9.5 L10.5 19.5 M3 14 L8.5 17 M2 16.8 L8.5 20" /><path d="M2.5 6.5 L10.5 10.5" /></g><path d="M1765 13.5 L1777 13.5" stroke="#111" stroke-width="1"/><rect x="1823.5" y="10.5" width="9" height="9" rx="1.5" fill="none" stroke="#111" stroke-width="1"/><path d="M1825.5 8.5 L1832.5 8.5 Q1835 8.5 1835 11 L1835 17.5" fill="none" stroke="#111" stroke-width="1"/><path d="M1882 8 L1894 20 M1894 8 L1882 20" stroke="#111" stroke-width="1"/>
<rect x="966.5" y="57.5" width="485" height="44" fill="#f1f1f6" stroke="#e1e1e7" stroke-width="1"/><rect x="970.5" y="70.0" width="1.6" height="1.4" fill="#aeaeb8"/><rect x="974.5" y="70.0" width="1.6" height="1.4" fill="#aeaeb8"/><rect x="970.5" y="73.7" width="1.6" height="1.4" fill="#aeaeb8"/><rect x="974.5" y="73.7" width="1.6" height="1.4" fill="#aeaeb8"/><rect x="970.5" y="77.4" width="1.6" height="1.4" fill="#aeaeb8"/><rect x="974.5" y="77.4" width="1.6" height="1.4" fill="#aeaeb8"/><rect x="970.5" y="81.1" width="1.6" height="1.4" fill="#aeaeb8"/><rect x="974.5" y="81.1" width="1.6" height="1.4" fill="#aeaeb8"/><rect x="970.5" y="84.8" width="1.6" height="1.4" fill="#aeaeb8"/><rect x="974.5" y="84.8" width="1.6" height="1.4" fill="#aeaeb8"/><rect x="970.5" y="88.5" width="1.6" height="1.4" fill="#aeaeb8"/><rect x="974.5" y="88.5" width="1.6" height="1.4" fill="#aeaeb8"/><use href="#i_new" x="984.0" y="62.5" width="33.9" height="33.9"/><use href="#i_open" x="1023.0" y="62.5" width="33.9" height="33.9"/><use href="#i_save" x="1063.0" y="62.5" width="33.9" height="33.9"/><use href="#i_cut" x="1111.0" y="62.5" width="33.9" height="33.9"/><use href="#i_copy" x="1151.0" y="62.5" width="33.9" height="33.9"/><use href="#i_paste" x="1190.0" y="62.5" width="33.9" height="33.9"/><use href="#i_delete" x="1231.0" y="62.5" width="33.9" height="33.9"/><use href="#i_undo" x="1278.0" y="62.5" width="33.9" height="33.9"/><use href="#i_redo" x="1318.0" y="62.5" width="33.9" height="33.9"/><use href="#i_print" x="1366.0" y="62.5" width="33.9" height="33.9"/><use href="#i_info" x="1413.0" y="62.5" width="33.9" height="33.9"/><rect x="1103.5" y="67.0" width="2.4" height="25" fill="#8a8a8a"/><rect x="1271" y="67.0" width="2.4" height="25" fill="#8a8a8a"/><rect x="1358" y="67.0" width="2.4" height="25" fill="#8a8a8a"/><rect x="1405" y="67.0" width="2.4" height="25" fill="#8a8a8a"/><rect x="0.5" y="102.5" width="296" height="44" fill="#f1f1f6" stroke="#e1e1e7" stroke-width="1"/><rect x="4" y="115.0" width="1.6" height="1.4" fill="#aeaeb8"/><rect x="8" y="115.0" width="1.6" height="1.4" fill="#aeaeb8"/><rect x="4" y="118.7" width="1.6" height="1.4" fill="#aeaeb8"/><rect x="8" y="118.7" width="1.6" height="1.4" fill="#aeaeb8"/><rect x="4" y="122.4" width="1.6" height="1.4" fill="#aeaeb8"/><rect x="8" y="122.4" width="1.6" height="1.4" fill="#aeaeb8"/><rect x="4" y="126.1" width="1.6" height="1.4" fill="#aeaeb8"/><rect x="8" y="126.1" width="1.6" height="1.4" fill="#aeaeb8"/><rect x="4" y="129.8" width="1.6" height="1.4" fill="#aeaeb8"/><rect x="8" y="129.8" width="1.6" height="1.4" fill="#aeaeb8"/><rect x="4" y="133.5" width="1.6" height="1.4" fill="#aeaeb8"/><rect x="8" y="133.5" width="1.6" height="1.4" fill="#aeaeb8"/><use href="#i_v_iso" x="18.0" y="107.5" width="33.9" height="33.9"/><use href="#i_v_top" x="57.0" y="107.5" width="33.9" height="33.9"/><use href="#i_v_front" x="98.0" y="107.5" width="33.9" height="33.9"/><use href="#i_v_right" x="137.0" y="107.5" width="33.9" height="33.9"/><use href="#i_v_back" x="177.0" y="107.5" width="33.9" height="33.9"/><use href="#i_v_left" x="217.0" y="107.5" width="33.9" height="33.9"/><use href="#i_v_bottom" x="257.0" y="107.5" width="33.9" height="33.9"/><rect x="300.5" y="102.5" width="344" height="44" fill="#f1f1f6" stroke="#e1e1e7" stroke-width="1"/><rect x="304" y="115.0" width="1.6" height="1.4" fill="#aeaeb8"/><rect x="308" y="115.0" width="1.6" height="1.4" fill="#aeaeb8"/><rect x="304" y="118.7" width="1.6" height="1.4" fill="#aeaeb8"/><rect x="308" y="118.7" width="1.6" height="1.4" fill="#aeaeb8"/><rect x="304" y="122.4" width="1.6" height="1.4" fill="#aeaeb8"/><rect x="308" y="122.4" width="1.6" height="1.4" fill="#aeaeb8"/><rect x="304" y="126.1" width="1.6" height="1.4" fill="#aeaeb8"/><rect x="308" y="126.1" width="1.6" height="1.4" fill="#aeaeb8"/><rect x="304" y="129.8" width="1.6" height="1.4" fill="#aeaeb8"/><rect x="308" y="129.8" width="1.6" height="1.4" fill="#aeaeb8"/><rect x="304" y="133.5" width="1.6" height="1.4" fill="#aeaeb8"/><rect x="308" y="133.5" width="1.6" height="1.4" fill="#aeaeb8"/><rect x="601.5" y="104.5" width="39" height="39" rx="4" fill="#e2e2e4" stroke="#d2d2d6" stroke-width="1.2"/><use href="#i_s_xray" x="319.6" y="109.1" width="28.8" height="28.8"/><use href="#i_s_back" x="359.6" y="109.1" width="28.8" height="28.8"/><use href="#i_s_wire" x="406.6" y="109.1" width="28.8" height="28.8"/><use href="#i_s_hidden" x="446.6" y="109.1" width="28.8" height="28.8"/><use href="#i_s_shaded" x="486.6" y="109.1" width="28.8" height="28.8"/><use href="#i_s_tex" x="526.6" y="109.1" width="28.8" height="28.8"/><use href="#i_s_mono" x="566.6" y="109.1" width="28.8" height="28.8"/><use href="#i_s_gray" x="606.6" y="109.1" width="28.8" height="28.8"/><rect x="397" y="111.5" width="2.4" height="25" fill="#8a8a8a"/><rect x="943.5" y="102.5" width="176" height="44" fill="#f1f1f6" stroke="#e1e1e7" stroke-width="1"/><rect x="947" y="115.0" width="1.6" height="1.4" fill="#aeaeb8"/><rect x="951" y="115.0" width="1.6" height="1.4" fill="#aeaeb8"/><rect x="947" y="118.7" width="1.6" height="1.4" fill="#aeaeb8"/><rect x="951" y="118.7" width="1.6" height="1.4" fill="#aeaeb8"/><rect x="947" y="122.4" width="1.6" height="1.4" fill="#aeaeb8"/><rect x="951" y="122.4" width="1.6" height="1.4" fill="#aeaeb8"/><rect x="947" y="126.1" width="1.6" height="1.4" fill="#aeaeb8"/><rect x="951" y="126.1" width="1.6" height="1.4" fill="#aeaeb8"/><rect x="947" y="129.8" width="1.6" height="1.4" fill="#aeaeb8"/><rect x="951" y="129.8" width="1.6" height="1.4" fill="#aeaeb8"/><rect x="947" y="133.5" width="1.6" height="1.4" fill="#aeaeb8"/><rect x="951" y="133.5" width="1.6" height="1.4" fill="#aeaeb8"/><rect x="1037.5" y="105.5" width="39" height="38" rx="4" fill="#dceaf8" stroke="#4a90d6" stroke-width="1.2"/><rect x="1077.5" y="105.5" width="38" height="38" rx="4" fill="#dceaf8" stroke="#4a90d6" stroke-width="1.2"/><use href="#i_sec_plane" x="957.6" y="105.6" width="36.8" height="36.8"/><use href="#i_sec_disp" x="996.6" y="105.6" width="36.8" height="36.8"/><use href="#i_sec_cut" x="1037.6" y="105.6" width="36.8" height="36.8"/><use href="#i_sec_fill" x="1077.6" y="105.6" width="36.8" height="36.8"/><rect x="1124.5" y="102.5" width="376" height="44" fill="#f1f1f6" stroke="#e1e1e7" stroke-width="1"/><rect x="1128" y="115.0" width="1.6" height="1.4" fill="#aeaeb8"/><rect x="1132" y="115.0" width="1.6" height="1.4" fill="#aeaeb8"/><rect x="1128" y="118.7" width="1.6" height="1.4" fill="#aeaeb8"/><rect x="1132" y="118.7" width="1.6" height="1.4" fill="#aeaeb8"/><rect x="1128" y="122.4" width="1.6" height="1.4" fill="#aeaeb8"/><rect x="1132" y="122.4" width="1.6" height="1.4" fill="#aeaeb8"/><rect x="1128" y="126.1" width="1.6" height="1.4" fill="#aeaeb8"/><rect x="1132" y="126.1" width="1.6" height="1.4" fill="#aeaeb8"/><rect x="1128" y="129.8" width="1.6" height="1.4" fill="#aeaeb8"/><rect x="1132" y="129.8" width="1.6" height="1.4" fill="#aeaeb8"/><rect x="1128" y="133.5" width="1.6" height="1.4" fill="#aeaeb8"/><rect x="1132" y="133.5" width="1.6" height="1.4" fill="#aeaeb8"/><rect x="1139.5" y="105.5" width="37" height="38" rx="4" fill="#dceaf8" stroke="#4a90d6" stroke-width="1.2"/><use href="#i_orbit" x="1139.6" y="105.6" width="36.8" height="36.8"/><use href="#i_pan" x="1179.6" y="105.6" width="36.8" height="36.8"/><use href="#i_zoom" x="1219.6" y="105.6" width="36.8" height="36.8"/><use href="#i_zoomwin" x="1259.6" y="105.6" width="36.8" height="36.8"/><use href="#i_zoomext" x="1299.6" y="105.6" width="36.8" height="36.8"/><use href="#i_prev" x="1339.6" y="105.6" width="36.8" height="36.8"/><use href="#i_poscam" x="1379.6" y="105.6" width="36.8" height="36.8"/><use href="#i_lookaround" x="1419.6" y="105.6" width="36.8" height="36.8"/><use href="#i_walk" x="1459.6" y="105.6" width="36.8" height="36.8"/><rect x="0.5" y="147.5" width="1072" height="44" fill="#f1f1f6" stroke="#e1e1e7" stroke-width="1"/><path d="M103 166.5 L113 166.5 L108 171.5 Z" fill="#7b7b80"/><rect x="119.5" y="156.5" width="2.4" height="25" fill="#8a8a8a"/><use href="#i_eraser" x="124.6" y="151.1" width="36.8" height="36.8"/><use href="#i_pencil" x="164.6" y="151.1" width="36.8" height="36.8"/><use href="#i_arc" x="220.6" y="151.1" width="36.8" height="36.8"/><use href="#i_rect" x="274.6" y="151.1" width="36.8" height="36.8"/><use href="#i_pushpull" x="337.6" y="151.1" width="36.8" height="36.8"/><use href="#i_offset" x="377.6" y="151.1" width="36.8" height="36.8"/><use href="#i_move" x="417.6" y="151.1" width="36.8" height="36.8"/><use href="#i_rotate" x="457.6" y="151.1" width="36.8" height="36.8"/><use href="#i_scale" x="497.6" y="151.1" width="36.8" height="36.8"/><use href="#i_flip" x="537.6" y="151.1" width="36.8" height="36.8"/><use href="#i_tape" x="584.6" y="151.1" width="36.8" height="36.8"/><use href="#i_paint" x="624.6" y="151.1" width="36.8" height="36.8"/><rect x="673.5" y="150.5" width="37" height="38" rx="4" fill="#dceaf8" stroke="#4a90d6" stroke-width="1.2"/><use href="#i_orbit" x="672.6" y="151.1" width="36.8" height="36.8"/><use href="#i_pan" x="712.6" y="151.1" width="36.8" height="36.8"/><use href="#i_zoom" x="752.6" y="151.1" width="36.8" height="36.8"/><use href="#i_zoomext" x="792.6" y="151.1" width="36.8" height="36.8"/><use href="#i_wh1" x="841.6" y="151.1" width="36.8" height="36.8"/><use href="#i_wh2" x="881.6" y="151.1" width="36.8" height="36.8"/><use href="#i_wh3" x="922.6" y="151.1" width="36.8" height="36.8"/><use href="#i_wh4" x="967.6" y="151.1" width="36.8" height="36.8"/><use href="#i_profile" x="1015.6" y="151.1" width="36.8" height="36.8"/><path d="M206 166.5 L216 166.5 L211 171.5 Z" fill="#7b7b80"/><path d="M261.5 166.5 L271.5 166.5 L266.5 171.5 Z" fill="#7b7b80"/><path d="M316 166.5 L326 166.5 L321 171.5 Z" fill="#7b7b80"/><path d="M1056.5 166.5 L1066.5 166.5 L1061.5 171.5 Z" fill="#7b7b80"/><rect x="332" y="156.5" width="2.4" height="25" fill="#8a8a8a"/><rect x="579.5" y="156.5" width="2.4" height="25" fill="#8a8a8a"/><rect x="666.5" y="156.5" width="2.4" height="25" fill="#8a8a8a"/><rect x="834" y="156.5" width="2.4" height="25" fill="#8a8a8a"/><rect x="961.6" y="156.5" width="2.4" height="25" fill="#8a8a8a"/><rect x="1009" y="156.5" width="2.4" height="25" fill="#8a8a8a"/><rect x="1073.5" y="147.5" width="345" height="44" fill="#f1f1f6" stroke="#e1e1e7" stroke-width="1"/><rect x="1076.5" y="159.0" width="1.6" height="1.4" fill="#aeaeb8"/><rect x="1080.5" y="159.0" width="1.6" height="1.4" fill="#aeaeb8"/><rect x="1076.5" y="162.7" width="1.6" height="1.4" fill="#aeaeb8"/><rect x="1080.5" y="162.7" width="1.6" height="1.4" fill="#aeaeb8"/><rect x="1076.5" y="166.4" width="1.6" height="1.4" fill="#aeaeb8"/><rect x="1080.5" y="166.4" width="1.6" height="1.4" fill="#aeaeb8"/><rect x="1076.5" y="170.1" width="1.6" height="1.4" fill="#aeaeb8"/><rect x="1080.5" y="170.1" width="1.6" height="1.4" fill="#aeaeb8"/><rect x="1076.5" y="173.8" width="1.6" height="1.4" fill="#aeaeb8"/><rect x="1080.5" y="173.8" width="1.6" height="1.4" fill="#aeaeb8"/><rect x="1076.5" y="177.5" width="1.6" height="1.4" fill="#aeaeb8"/><rect x="1080.5" y="177.5" width="1.6" height="1.4" fill="#aeaeb8"/><use href="#i_jpp0" x="1088.0" y="152.5" width="33.9" height="33.9"/><use href="#i_jpp1" x="1137.0" y="152.5" width="33.9" height="33.9"/><use href="#i_jpp2" x="1176.0" y="152.5" width="33.9" height="33.9"/><use href="#i_jpp3" x="1216.5" y="152.5" width="33.9" height="33.9"/><use href="#i_jpp4" x="1256.0" y="152.5" width="33.9" height="33.9"/><use href="#i_jpp5" x="1296.0" y="152.5" width="33.9" height="33.9"/><use href="#i_jpp6" x="1336.0" y="152.5" width="33.9" height="33.9"/><use href="#i_jpp7" x="1376.5" y="152.5" width="33.9" height="33.9"/><rect x="1129.5" y="157.5" width="2.4" height="24" fill="#8a8a8a"/><rect x="1418.5" y="147.5" width="96" height="44" fill="#f1f1f6" stroke="#e1e1e7" stroke-width="1"/><rect x="1421" y="159.0" width="1.6" height="1.4" fill="#aeaeb8"/><rect x="1425" y="159.0" width="1.6" height="1.4" fill="#aeaeb8"/><rect x="1421" y="162.7" width="1.6" height="1.4" fill="#aeaeb8"/><rect x="1425" y="162.7" width="1.6" height="1.4" fill="#aeaeb8"/><rect x="1421" y="166.4" width="1.6" height="1.4" fill="#aeaeb8"/><rect x="1425" y="166.4" width="1.6" height="1.4" fill="#aeaeb8"/><rect x="1421" y="170.1" width="1.6" height="1.4" fill="#aeaeb8"/><rect x="1425" y="170.1" width="1.6" height="1.4" fill="#aeaeb8"/><rect x="1421" y="173.8" width="1.6" height="1.4" fill="#aeaeb8"/><rect x="1425" y="173.8" width="1.6" height="1.4" fill="#aeaeb8"/><rect x="1421" y="177.5" width="1.6" height="1.4" fill="#aeaeb8"/><rect x="1425" y="177.5" width="1.6" height="1.4" fill="#aeaeb8"/><use href="#i_page" x="1434.0" y="152.5" width="33.9" height="33.9"/><use href="#i_person" x="1475.0" y="152.5" width="33.9" height="33.9"/><rect x="1515.5" y="147.5" width="57" height="44" fill="#f1f1f6" stroke="#e1e1e7" stroke-width="1"/><rect x="1519" y="159.0" width="1.6" height="1.4" fill="#aeaeb8"/><rect x="1523" y="159.0" width="1.6" height="1.4" fill="#aeaeb8"/><rect x="1519" y="162.7" width="1.6" height="1.4" fill="#aeaeb8"/><rect x="1523" y="162.7" width="1.6" height="1.4" fill="#aeaeb8"/><rect x="1519" y="166.4" width="1.6" height="1.4" fill="#aeaeb8"/><rect x="1523" y="166.4" width="1.6" height="1.4" fill="#aeaeb8"/><rect x="1519" y="170.1" width="1.6" height="1.4" fill="#aeaeb8"/><rect x="1523" y="170.1" width="1.6" height="1.4" fill="#aeaeb8"/><rect x="1519" y="173.8" width="1.6" height="1.4" fill="#aeaeb8"/><rect x="1523" y="173.8" width="1.6" height="1.4" fill="#aeaeb8"/><rect x="1519" y="177.5" width="1.6" height="1.4" fill="#aeaeb8"/><rect x="1523" y="177.5" width="1.6" height="1.4" fill="#aeaeb8"/><g transform="translate(1529.0 152.0) scale(1.0)"><path d="M5.5 6.5 Q1.5 1.5 9 2 Q14 2.6 18.5 0.8 Q21 0 19.5 3" fill="none" stroke="#2424b4" stroke-width="2"/><path d="M13 2.5 Q10.5 12 9.5 15.5 Q7.5 21.5 2.5 20.5 Q-0.5 19 1.5 16 Q3 14.5 5 16" fill="none" stroke="#2424b4" stroke-width="2.2"/><path d="M7.5 11.5 L15 10.5" stroke="#2424b4" stroke-width="1.8"/><text x="17" y="21" font-size="22" font-style="italic" fill="#2424b4" stroke="#2424b4" stroke-width="0.7" font-family="Liberation Serif">6</text><rect x="0" y="25" width="38" height="3" fill="#1aa03a"/><path d="M22 21.5 L38 21.5 L30 33.5 Z" fill="#000" stroke="#fff" stroke-width="1"/></g><rect x="1574.5" y="147.5" width="350" height="44" fill="#f1f1f6" stroke="#e1e1e7" stroke-width="1"/><rect x="1577" y="159.0" width="1.6" height="1.4" fill="#aeaeb8"/><rect x="1581" y="159.0" width="1.6" height="1.4" fill="#aeaeb8"/><rect x="1577" y="162.7" width="1.6" height="1.4" fill="#aeaeb8"/><rect x="1581" y="162.7" width="1.6" height="1.4" fill="#aeaeb8"/><rect x="1577" y="166.4" width="1.6" height="1.4" fill="#aeaeb8"/><rect x="1581" y="166.4" width="1.6" height="1.4" fill="#aeaeb8"/><rect x="1577" y="170.1" width="1.6" height="1.4" fill="#aeaeb8"/><rect x="1581" y="170.1" width="1.6" height="1.4" fill="#aeaeb8"/><rect x="1577" y="173.8" width="1.6" height="1.4" fill="#aeaeb8"/><rect x="1581" y="173.8" width="1.6" height="1.4" fill="#aeaeb8"/><rect x="1577" y="177.5" width="1.6" height="1.4" fill="#aeaeb8"/><rect x="1581" y="177.5" width="1.6" height="1.4" fill="#aeaeb8"/><use href="#i_pencil" x="1586.6" y="151.1" width="36.8" height="36.8"/><use href="#i_freehand" x="1626.6" y="151.1" width="36.8" height="36.8"/><use href="#i_rect" x="1666.6" y="151.1" width="36.8" height="36.8"/><use href="#i_rotrect" x="1707.6" y="151.1" width="36.8" height="36.8"/><use href="#i_circle" x="1747.6" y="151.1" width="36.8" height="36.8"/><use href="#i_polygon" x="1787.6" y="151.1" width="36.8" height="36.8"/><use href="#i_arc" x="1827.6" y="151.1" width="36.8" height="36.8"/><use href="#i_arc3" x="1867.1" y="151.1" width="36.8" height="36.8"/><circle cx="1917" cy="172" r="2" fill="#0f3f6f"/><rect x="0.5" y="192.5" width="1576" height="44" fill="#f1f1f6" stroke="#e1e1e7" stroke-width="1"/><g transform="translate(97.5 199.0) scale(0.97)"><path d="M3 18 L10 8 L18 6 L24 12 L30 22 L22 29 L12 28 Z" fill="#fff" stroke="#222" stroke-width="1.5"/><path d="M12 28 L17 17 L30 22 L22 29 Z" fill="#ff3a10" stroke="#222" stroke-width="1.2"/><path d="M10 8 L17 17 L24 12 M3 18 L17 17" fill="none" stroke="#333" stroke-width="1"/><path d="M3 18 L8 24 L12 28" stroke="#000" stroke-width="2.5" fill="none"/></g><g transform="translate(137.5 199.0) scale(0.97)"><path d="M4 28 L30 10" stroke="#111" stroke-width="1.8"/><path d="M6 4 L17 17" stroke="#ff2020" stroke-width="1.6"/><circle cx="17.5" cy="18" r="3.8" fill="#ff0000" stroke="#000" stroke-width="1.2"/><path d="M14 14 L18 12 L21 15" fill="#fff" stroke="#000" stroke-width="1"/></g><g transform="translate(177.5 199.0) scale(0.97)"><path d="M6 10 L17 4 L28 10" fill="none" stroke="#222" stroke-width="1.5" stroke-dasharray="3 2"/><path d="M6 10 L6 22" stroke="#222" stroke-width="1.5" stroke-dasharray="3 2"/><path d="M4 26 L12 30 L20 30 L14 22 Z" fill="#555"/><path d="M9 14 L17 9 L25 14 L27 24 L19 30 L11 26 Z" fill="#fff" stroke="#111" stroke-width="1.8"/></g><g transform="translate(217.5 199.0) scale(0.97)"><path d="M3 8 L3 22 L11 28 L17 24 L28 28 L31 24 L31 18 L20 12 L14 15 L14 10 Z" fill="#fff" stroke="#111" stroke-width="1.6" stroke-linejoin="round"/><path d="M3 14 L11 19 L17 16 L31 21 M11 19 L11 28 M17 16 L17 24" fill="none" stroke="#111" stroke-width="1.2"/><path d="M3 4 L3 12 M20 5 L20 12" stroke="#222" stroke-width="1.2"/></g><g transform="translate(257.5 199.0) scale(0.97)"><path d="M4 18 L14 14 L4 22 Z" fill="#777"/><path d="M8 6 Q26 6 28 28" fill="none" stroke="#222" stroke-width="8" stroke-linecap="round"/><path d="M8 6 Q26 6 28 28" fill="none" stroke="#f4f4f4" stroke-width="5.5" stroke-linecap="round"/><path d="M9 7 Q23 8 25 26" fill="none" stroke="#e03060" stroke-width="1"/><path d="M9 5 Q13 5 15 6" stroke="#5050d0" stroke-width="1.2"/></g><g transform="translate(297.5 199.0) scale(0.97)"><path d="M3 22 L10 12 L22 10 L30 22 L18 29 Z" fill="#fff" stroke="#111" stroke-width="1.6" stroke-linejoin="round"/><path d="M10 12 L18 17 L22 10 M18 17 L18 29 M3 22 L18 17 L30 22" fill="none" stroke="#222" stroke-width="1"/><path d="M10 12 L11 6 L18 4 L22 10" fill="none" stroke="#ff1010" stroke-width="1.6"/><path d="M11 6 L18 9 L22 10 M18 4 L18 9" fill="none" stroke="#ff1010" stroke-width="1.2"/></g><g transform="translate(337.5 199.0) scale(0.97)"><path d="M4 10 L10 8 L10 26 L4 26 Z" fill="#6a6a60"/><circle cx="18" cy="20" r="10" fill="#f0f0f0" stroke="#111" stroke-width="1.8"/><ellipse cx="18" cy="8" rx="7" ry="4" fill="#b8c0e0" stroke="#222" stroke-width="1.2"/><path d="M8 16 Q8 28 14 28" fill="none" stroke="#444" stroke-width="2"/><line x1="17" y1="8" x2="18" y2="31" stroke="#ff1010" stroke-width="1.6"/><path d="M18 20 L16 31 L20 31 Z" fill="#555"/></g><g transform="translate(377.5 199.0) scale(0.97)"><path d="M3 10 L15 4 L27 10 L27 22 L15 29 L3 22 Z" fill="#fff" stroke="#111" stroke-width="1.4" stroke-linejoin="round"/><path d="M3 10 L17 15 L27 10 M17 15 L15 29 M17 15 L3 22" fill="none" stroke="#222" stroke-width="1"/><path d="M26 12 L31 16 L26 20 Z" fill="#000"/><circle cx="18" cy="15" r="2.4" fill="#ff0000" stroke="#600" stroke-width="0.6"/></g><g transform="translate(417.5 199.0) scale(0.97)"><path d="M5 30 L5 14 Q5 4 15 4 L30 4" fill="none" stroke="#111" stroke-width="2.8"/><path d="M5 22 L5 14 Q5 5 14 4.5" fill="none" stroke="#ff1010" stroke-width="2"/><path d="M18 4 L30 4" stroke="#000" stroke-width="3"/></g><g transform="translate(457.5 199.0) scale(0.97)"><path d="M5 30 L5 4 L30 4" fill="none" stroke="#111" stroke-width="2.2"/><path d="M5 14 L16 4" stroke="#ff1010" stroke-width="1.8"/><path d="M5 4 L12 4" stroke="#111" stroke-width="1" stroke-dasharray="2 2"/></g><g transform="translate(497.5 199.0) scale(0.97)"><path d="M3 28 L29 6" stroke="#111" stroke-width="1.8"/><path d="M3 28 L29 24" stroke="#ff1010" stroke-width="1.6"/><path d="M20 24 L29 24" stroke="#111" stroke-width="1.8"/><circle cx="7" cy="25" r="2.8" fill="#c00" stroke="#000" stroke-width="1"/></g><g transform="translate(537.5 199.0) scale(0.97)"><path d="M4 10 L10 4 L24 4 L30 12 L30 28 L12 24 Z" fill="#fff" stroke="#111" stroke-width="1.6" stroke-linejoin="round"/><path d="M4 14 L12 26 L30 30" fill="none" stroke="#555" stroke-width="4"/><path d="M2 10 L10 22 L30 28" fill="none" stroke="#ff1010" stroke-width="2.2"/></g><g transform="translate(577.5 199.0) scale(0.97)"><path d="M4 8 L12 4 L30 4 L30 28 L12 30 L4 26 Z" fill="#fff" stroke="#111" stroke-width="1.8" stroke-linejoin="round"/><path d="M12 4 L12 30 M4 8 L30 8 M20 8 L20 30" fill="none" stroke="#111" stroke-width="1.4"/><path d="M4 22 L10 24 L20 21 L30 22" fill="none" stroke="#ff1010" stroke-width="2"/><path d="M2 16 L2 28" stroke="#333" stroke-width="3"/><path d="M20 14 L26 30" stroke="#111" stroke-width="1.4"/></g><g transform="translate(617.5 199.0) scale(0.97)"><path d="M8 4 L26 20 L22 30 L4 24 Z" fill="#e8e8e8" stroke="#222" stroke-width="1.2"/><path d="M8 4 L14 24 L4 24" fill="#ccc" stroke="#444" stroke-width="1"/><path d="M9 4 Q20 12 22 30" fill="none" stroke="#ff1010" stroke-width="1.5"/><path d="M8 20 Q18 20 22 28" fill="none" stroke="#4040e0" stroke-width="1.2"/></g><g transform="translate(657.5 199.0) scale(0.97)"><path d="M2 28 L8 26 L6 30 Z" fill="#666"/><g fill="#f4f4f4" stroke="#222" stroke-width="1.3"><rect x="4" y="14" width="5" height="14" rx="2.5"/><rect x="11" y="10" width="5" height="16" rx="2.5"/><rect x="18" y="6" width="5" height="17" rx="2.5"/><rect x="25" y="4" width="5" height="15" rx="2.5"/></g></g><g transform="translate(697.5 199.0) scale(0.97)"><g fill="#eee" stroke="#222" stroke-width="1.2"><rect x="3" y="12" width="4" height="14" rx="2"/><rect x="8" y="6" width="4" height="22" rx="2"/><rect x="13" y="3" width="4" height="26" rx="2"/><rect x="18" y="5" width="4" height="24" rx="2"/><rect x="23" y="9" width="4" height="18" rx="2"/><rect x="27" y="13" width="4" height="12" rx="2"/></g><path d="M3 18 L31 18" stroke="#333" stroke-width="1"/></g><g transform="translate(737.5 199.0) scale(0.97)"><ellipse cx="17" cy="24" rx="12" ry="6" fill="none" stroke="#222" stroke-width="1.6"/><g stroke="#333" stroke-width="2.4" fill="none"><path d="M6 22 L6 10 M10 24 L10 7 M14 25 L14 5 M18 25 L18 5 M22 24 L22 6 M26 22 L26 8 M29 19 L29 10"/></g><g stroke="#eee" stroke-width="0.8"><path d="M7 21 L7 11 M11 23 L11 8 M15 24 L15 6 M19 24 L19 6 M23 23 L23 7"/></g><path d="M2 14 L4 14 M2 18 L4 18 M2 22 L4 22" stroke="#333" stroke-width="1"/></g><g transform="translate(777.5 199.0) scale(0.97)"><path d="M2 20 L14 12 L14 30 Z" fill="#888"/><path d="M8 14 L18 8 L18 24 L8 30 Z M18 8 L30 4 L30 20 L18 24" fill="#f6f6f6" stroke="#222" stroke-width="1.6" stroke-linejoin="round"/><path d="M13 11 L13 27 M23 6 L23 22" stroke="#888" stroke-width="1"/></g><g transform="translate(817.5 199.0) scale(0.97)"><path d="M2 20 L20 10 L20 26 Z" fill="#777"/><path d="M18 10 L30 4 L30 22 L18 30 Z" fill="#fff" stroke="#111" stroke-width="1.6"/><rect x="21" y="12" width="5" height="9" fill="#333"/><path d="M18 10 L18 30" stroke="#111" stroke-width="2.2"/></g><g transform="translate(857.5 199.0) scale(0.97)"><rect x="2" y="4" width="9" height="24" fill="#888"/><path d="M11 4 L30 4 L30 30 L11 30 Z" fill="#fff" stroke="#111" stroke-width="1.2"/><g fill="none" stroke="#111" stroke-width="1.8"><path d="M10 10 Q14 8 30 10 M10 17 Q14 15 30 17 M10 24 Q14 22 30 24"/></g><g stroke="#aaa" stroke-width="1.2"><path d="M12 13 L30 13 M12 20 L30 20 M12 27 L30 27"/></g><path d="M10 4 Q8 18 11 30" fill="none" stroke="#111" stroke-width="2"/></g><g transform="translate(897.5 199.0) scale(0.97)"><path d="M2 30 L24 6 L30 4 L30 18 L20 26 Z" fill="#888"/><path d="M2 28 L24 4 L31 6 L8 31 Z" fill="#f4f4f4" stroke="#333" stroke-width="1.2"/><g stroke="#999" stroke-width="0.9"><path d="M6 25 L12 27 M9 21 L15 24 M12 18 L18 20 M15 14 L21 17 M18 11 L24 13 M21 8 L27 10"/></g></g><g transform="translate(937.5 199.0) scale(0.97)"><path d="M2 8 L8 8 L8 13 L14 13 L14 18 L30 18" fill="none" stroke="#111" stroke-width="2.2"/><path d="M2 30 L30 18" stroke="#111" stroke-width="2"/><path d="M2 24 L12 20 L30 20" stroke="#111" stroke-width="1.6" fill="none"/><path d="M14 18 L22 20" stroke="#000" stroke-width="3"/></g><g transform="translate(977.5 199.0) scale(0.97)"><path d="M2 8 L8 8 L8 13 L14 13 L14 18 L30 18" fill="none" stroke="#111" stroke-width="1.8"/><path d="M4 11 L10 11 L10 16 L16 16 L16 21 L30 21" fill="none" stroke="#555" stroke-width="1.4"/><path d="M2 30 L8 30 L8 25 L14 25 L14 20 L20 20" fill="none" stroke="#111" stroke-width="1.8"/><path d="M4 28 L10 28 L10 23 L16 23" fill="none" stroke="#555" stroke-width="1.4"/></g><g transform="translate(1017.5 199.0) scale(0.97)"><path d="M2 4 L30 18 M2 30 L30 18" stroke="#111" stroke-width="2"/><path d="M2 8 L22 16" stroke="#111" stroke-width="3" stroke-dasharray="2.5 2"/><path d="M22 14 L30 14 L30 22 L22 22" fill="#fff" stroke="#111" stroke-width="1.6"/><path d="M22 14 L22 22" stroke="#111" stroke-width="1"/></g><g transform="translate(1057.5 199.0) scale(0.97)"><path d="M2 30 L2 12 Q2 3 14 3 Q30 3 30 18 L30 30 Z" fill="#9a9a9a"/><g stroke="#eee" stroke-width="1.6" fill="none"><path d="M16 18 L6 10 M16 18 L12 5 M16 18 L22 5 M16 18 L28 12 M16 18 L29 22 M16 18 L22 29"/></g><circle cx="16" cy="18" r="3" fill="#666"/><rect x="2" y="26" width="28" height="4" fill="#777"/><path d="M4 14 Q6 6 14 5" fill="none" stroke="#555" stroke-width="2"/></g><g transform="translate(1097.5 199.0) scale(0.97)"><path d="M2 30 L22 4 L30 4 L30 30 Z" fill="#888"/><path d="M2 28 L22 2 L30 6 L10 31 Z" fill="#ccc"/><g stroke="#fff" stroke-width="2" fill="none"><path d="M5 28 L24 4 M9 29 L27 6"/></g><g stroke="#444" stroke-width="1.2" fill="none"><path d="M3 26 L22 3 M11 31 L30 8"/></g><path d="M2 26 L10 31 L2 31 Z" fill="#fff"/></g><g transform="translate(1137.5 199.0) scale(0.97)"><path d="M2 26 L12 22 L30 26 L20 30 Z" fill="none" stroke="#999" stroke-width="2"/><path d="M10 8 L28 4 L28 20 L10 24 Z" fill="none" stroke="#666" stroke-width="3.2"/><path d="M10 8 L28 4 L28 20 L10 24 Z" fill="none" stroke="#ddd" stroke-width="1.2"/><path d="M14 11 L24 9 L24 18 L14 20 Z" fill="#f2f2f2"/></g><g transform="translate(1177.5 199.0) scale(0.97)"><path d="M2 24 L10 30 L10 20" fill="none" stroke="#999" stroke-width="2"/><path d="M8 30 L8 10 Q8 4 16 4 L24 4 Q28 4 28 10 L28 22" fill="none" stroke="#555" stroke-width="3.2"/><path d="M8 30 L8 10 Q8 4 16 4 L24 4 Q28 4 28 10 L28 22" fill="none" stroke="#ccc" stroke-width="1.2"/><path d="M13 28 L13 12 Q13 9 17 9 L22 9 L22 24" fill="none" stroke="#888" stroke-width="2"/></g><g transform="translate(1217.5 199.0) scale(0.97)"><path d="M2 20 L6 18 L6 28 L2 28 Z" fill="#888"/><rect x="6" y="4" width="24" height="25" fill="#aaa" stroke="#333" stroke-width="1.4"/><g stroke="#111" stroke-width="2.2"><path d="M12 4 L12 29 M18 4 L18 29 M24 4 L24 29 M6 11 L30 11 M6 18 L30 18 M6 25 L30 25"/></g><g stroke="#eee" stroke-width="0.8"><path d="M10 4 L10 29 M16 4 L16 29 M22 4 L22 29"/></g></g><g transform="translate(1257.5 199.0) scale(0.97)"><rect x="2" y="3" width="28" height="28" fill="#d8d8d8"/><g stroke="#222" stroke-width="2.6"><path d="M2 12 L12 3 M2 22 L22 3 M5 31 L30 8 M15 31 L30 18 M25 31 L30 27"/></g><g stroke="#fff" stroke-width="1.2"><path d="M3 15 L14 5 M3 25 L25 5 M8 31 L30 11 M18 31 L30 21"/></g><g stroke="#555" stroke-width="1.4"><path d="M4 6 L28 30 M3 16 L18 31 M14 3 L30 19"/></g></g><g transform="translate(1297.5 199.0) scale(0.97)"><rect x="2" y="3" width="28" height="28" fill="#888"/><g fill="#fff" stroke="#555" stroke-width="1"><path d="M8 6 L30 6 L30 10 L14 10 Z"/><path d="M8 13 L30 13 L30 17 L14 17 Z"/><path d="M8 20 L30 20 L30 24 L14 24 Z"/><path d="M8 27 L30 27 L30 31 L14 31 Z"/></g><rect x="2" y="3" width="6" height="28" fill="#9a9a9a"/></g><g transform="translate(1337.5 199.0) scale(0.97)"><rect x="2" y="3" width="28" height="28" fill="#f0f0f0"/><g fill="#fff" stroke="#aaa" stroke-width="1"><rect x="4" y="3" width="8" height="26"/><rect x="14" y="3" width="5" height="26"/><rect x="21" y="3" width="5" height="26"/><rect x="27" y="3" width="3" height="26"/></g><path d="M2 31 L30 31" stroke="#999" stroke-width="3"/><path d="M12 3 L12 29 M19 3 L19 29 M26 3 L26 29" stroke="#666" stroke-width="1.2"/></g><g transform="translate(1377.5 199.0) scale(0.97)"><path d="M2 16 L16 3 L30 8 L30 30 L10 31 Z" fill="#999"/><g fill="#6a6a5a" stroke="#111" stroke-width="1.8"><path d="M4 16 L14 6 L14 24 Z"/><path d="M17 6 L28 9 L22 17 Z"/><path d="M16 20 L26 20 L22 30 L14 28 Z"/></g><g stroke="#fff" stroke-width="1.6" fill="none"><path d="M2 17 L15 4 M15 26 L28 30 M28 8 L30 26"/></g></g><g transform="translate(1417.5 199.0) scale(0.97)"><g fill="#fff" stroke="#111" stroke-width="2"><path d="M2 16 L16 3 L16 29 Z"/><path d="M19 6 L30 6 L26 16 Z"/><path d="M18 20 L30 18 L28 30 L18 28 Z"/></g><g fill="#555"><path d="M6 16 L13 9 L13 23 Z"/><path d="M21 22 L27 21 L26 27 L21 26 Z"/></g></g><g transform="translate(1457.5 199.0) scale(0.97)"><g stroke="#777" stroke-width="4"><path d="M3 20 L20 4 M7 26 L24 8 M13 30 L28 12 M20 31 L30 20"/></g><g stroke="#ccc" stroke-width="1.4"><path d="M3 19 L19 4 M7 25 L23 8 M13 29 L27 12"/></g><path d="M22 4 L30 4 L30 12 Z" fill="#aaa"/></g><g transform="translate(1497.5 199.0) scale(0.97)"><rect x="2" y="3" width="28" height="28" fill="#e0e0e0"/><g stroke="#111" stroke-width="2.6"><path d="M2 10 L10 3 M2 20 L20 3 M4 30 L14 14 M12 30 L22 14 M20 30 L30 16"/></g><g stroke="#777" stroke-width="1.8"><path d="M16 10 L30 30 M22 4 L30 18 M8 31 L18 22"/></g><g stroke="#fff" stroke-width="1"><path d="M4 12 L12 5 M5 22 L21 6"/></g></g><g transform="translate(1537.5 199.0) scale(0.97)"><path d="M2 16 L16 4 L30 14 L16 28 Z" fill="#f6f6f6" stroke="#555" stroke-width="1.6" stroke-linejoin="round"/><path d="M10 26 L10 14 L22 14 L22 24" fill="#fff" stroke="#555" stroke-width="1.6"/><path d="M12 14 L18 8 L22 14" fill="none" stroke="#777" stroke-width="1.4"/><path d="M14 14 L14 26" stroke="#999" stroke-width="1"/></g><circle cx="92" cy="214" r="2.5" fill="#222"/><rect x="0.5" y="237.5" width="200" height="44" fill="#f1f1f6" stroke="#e1e1e7" stroke-width="1"/><use href="#i_hand" x="86.0" y="243.0" width="33.9" height="33.9"/><use href="#i_outliner" x="120.0" y="242.5" width="33.9" height="33.9"/><use href="#i_scenes" x="160.0" y="242.5" width="33.9" height="33.9"/>

<defs>
<pattern id="louv" width="4" height="10" patternUnits="userSpaceOnUse" patternTransform="rotate(5)">
<rect width="4" height="10" fill="#0c0c0c"/><rect x="1.6" width="1.1" height="10" fill="#9a9a9a"/>
</pattern>
<pattern id="brick" width="9" height="3.2" patternUnits="userSpaceOnUse" patternTransform="rotate(-0.6)">
<rect width="9" height="3.2" fill="#c98a73"/><rect x="0" y="0" width="9" height="1.1" fill="#c28677"/><rect x="1" y="1.6" width="5" height="1.2" fill="#d0886b"/>
</pattern>
<clipPath id="vpclip"><rect x="0" y="282" width="1920" height="725"/></clipPath>
</defs>
<g clip-path="url(#vpclip)">
<!-- axes -->
<line x1="666.5" y1="437" x2="655.3" y2="281" stroke="#1414c0" stroke-width="1.2"/>
<line x1="666.5" y1="437" x2="708" y2="1007" stroke="#2020d0" stroke-width="1.2" stroke-dasharray="1.2 3"/>
<line x1="666.5" y1="437" x2="0" y2="856.6" stroke="#c81818" stroke-width="1.05"/>
<line x1="666.5" y1="437" x2="877.6" y2="304" stroke="#d41414" stroke-width="1.2" stroke-dasharray="1.2 4"/>
<line x1="666.5" y1="437" x2="1920" y2="428" stroke="#10a010" stroke-width="1.3"/>
<line x1="666.5" y1="437" x2="90" y2="440.5" stroke="#14a014" stroke-width="1.2" stroke-dasharray="1.2 4"/>
</g>
<g stroke="#000" stroke-width="1.6" stroke-linejoin="round">
<!-- roof parapet top surface -->
<polygon points="734,446 1151.5,442.5 1241,488 684.4,494" fill="#a4a4a4" stroke-width="2.4"/>
<!-- inner floor -->
<polygon points="722,489 756,449 1136.5,445.6 1208.7,484.3" fill="#9c9c9c" stroke-width="1.2"/>
<!-- inner back wall -->
<polygon points="756,449 1136.5,445.6 1135,479 757,481" fill="#ffffff"/>
<!-- left inner wall -->
<polygon points="756,449 757,489 722,489" fill="#707070"/>
<line x1="739" y1="470" x2="740" y2="489" stroke-width="1"/>
<!-- right inner wall -->
<polygon points="1136.5,445.6 1208.7,484.3 1134,484" fill="#7a7a7a"/>
<!-- floor slab lines -->
<line x1="1000" y1="481" x2="1140" y2="480" stroke-width="1"/>
<!-- tower -->
<polygon points="833,392 841,392 843,486 835,487" fill="#fff"/>
<polygon points="832.7,392 836,385 841,386.8 841,395" fill="#9a9a9a" stroke-width="1"/>
<polygon points="841,401 984.4,399 986,486 843,486.3" fill="url(#brick)" stroke-width="1.2"/>
<polygon points="983.8,385.6 992.5,393 992.5,399 984.4,399" fill="#9a9a9a" stroke-width="1"/><polygon points="984.4,399 992.5,396 992,486 986,486" fill="url(#brick)"/><polygon points="985,399 989,397.5 989,486 986,486" fill="#b9c9d6" stroke-width="0"/>
<polygon points="842.6,378.7 974,377.5 983.8,385.6 840,386.8" fill="#9c9c9c" stroke-width="2"/>
<polygon points="855,381 968,380 968,386 855,387" fill="#fff" stroke-width="1"/>
<polygon points="840,386.8 983.8,385.6 983,399 841,401" fill="#fff" stroke-width="2"/>
<rect x="931" y="426" width="40" height="60" fill="#fff" stroke-width="3.2"/>
<!-- parapet front face -->
<polygon points="684.4,494 1241,488 1238.6,530.4 687.6,537.6" fill="#fff" stroke-width="2.4"/>
<!-- upper floor: side box -->
<polygon points="669,540 684.6,523 688,538" fill="#9d9d9d" stroke-width="1.2"/>
<polygon points="669,540 719.6,538 721,617 676,619" fill="#fff" stroke-width="1.8"/>
<!-- upper brick wall -->
<polygon points="718,538 1184,531 1179,640 723,645" fill="url(#brick)" stroke-width="1.2"/>
<polygon points="1184,531 1200,531 1193.5,640 1179,640" fill="#fff" stroke-width="1.4"/>
<line x1="1180" y1="606" x2="1196" y2="606" stroke-width="0.8"/>
<!-- window frame -->
<polygon points="763,550 1173,547 1169.4,632.3 766.3,638.3" fill="#fff" stroke-width="1.6"/>
<polygon points="765,551 1172,548 1171,553 765,556" fill="#a8a8a8" stroke-width="0"/>
<polygon points="783,567 1154,561.3 1152,617 786.5,621" fill="url(#louv)" stroke-width="2"/>
<polygon points="786.5,621 1152,617 1152,622 787,626.5" fill="#a6a6a6" stroke-width="1"/>
<polygon points="724,612 737,612 737,647 724,647" fill="#fff" stroke-width="1"/>
<!-- slab -->
<polygon points="716,619 724,645 1179,638 1196,619 1221,645 697,652" fill="#a2a2a2" stroke-width="1.4"/>
<polygon points="1009,641 1179,638 1196,619 1221,645 1009,648" fill="#7f8a93" stroke-width="1"/>
<polygon points="697,652 1221,645 1221,651 697,659" fill="#fff" stroke-width="1.6"/>
<polygon points="1009,648 1221,645 1221,651 1009,655" fill="#c7d4df" stroke-width="1"/>
<!-- lower floor -->
<polygon points="718.5,761.5 728.5,730 729,762" fill="#a0a0a0" stroke-width="1.2"/>
<polygon points="723,658 741,658 746,767 730,770" fill="#fff" stroke-width="1.4"/>
<line x1="735.5" y1="658" x2="741" y2="765" stroke-width="0.9"/>
<polygon points="741,658 755,658 757,752 744,752" fill="#fff" stroke-width="1"/>
<polygon points="744,752 806,750 830,757 830,764 744,767" fill="#fff" stroke-width="0.8"/>
<polygon points="755,658 803,657 804,709 757,710" fill="url(#brick)" stroke-width="1"/>
<polygon points="743.5,716 750.5,715 744.4,734" fill="#565c62" stroke-width="0.8"/>
<polygon points="752.5,708.5 803.5,707.5 805,751 744.4,752 744.4,734.4" fill="#656c72" stroke-width="1.3"/>
<polygon points="744.4,751 805,750 805,753 744.4,754" fill="#9aa0a4" stroke-width="0.6"/>
<polygon points="803,657 828,657 830,764 805,764" fill="#fff" stroke-width="1.4"/>
<polygon points="828,657 843,657 845,765 830,765" fill="url(#brick)" stroke-width="1"/>
<polygon points="843,656 993,654 995,762 845,764" fill="url(#brick)" stroke-width="1.2"/>
<polygon points="852,663 963.5,661 963.5,732 853,734" fill="url(#louv)" stroke-width="2"/>
<polygon points="993,654 1007,654 1008,762 995,762" fill="#fff" stroke-width="1.4"/>
<polygon points="1007,654 1175,651 1173,753 1008,760" fill="url(#brick)" stroke-width="1.2"/>
<polygon points="1026,656.4 1158.6,655 1156,722 1025,727.4" fill="url(#louv)" stroke-width="2"/>
<polygon points="1175,651 1192,651 1187,759 1173,758" fill="#b8c8d5" stroke-width="1.4"/>
<polygon points="731,766 1173,752 1187,759 733,772" fill="#fff" stroke-width="1.6"/>
</g>

<path d="M170.5 1021 L170.5 1019 Q170.5 1015.5 174 1015.5 L366 1015.5 Q369.5 1015.5 369.5 1019 L369.5 1021" fill="#f7f7f9" stroke="#a9a9ae" stroke-width="1"/><rect x="372" y="1007" width="1" height="13" fill="#dedee4"/>
<rect x="5.5" y="143.5" width="85" height="877" fill="#f1f1f6" stroke="#e2e2e8" stroke-width="1"/><rect x="7" y="146" width="80" height="25" fill="#9db5d3"/><text x="13" y="166" font-size="15" font-weight="bold" fill="#3a3a44" font-family="Liberation Sans">Larg...</text><path d="M71.5 153.5 L80.5 162.5 M80.5 153.5 L71.5 162.5" stroke="#1f4f7f" stroke-width="1.2"/><rect x="9.5" y="805.5" width="37" height="37" rx="4" fill="#dceaf8" stroke="#4a90d6" stroke-width="1.2"/><use href="#i_select" x="12.8" y="179.3" width="30.4" height="30.4"/><use href="#i_lasso" x="49.6" y="176.1" width="36.8" height="36.8"/><use href="#i_paint" x="9.6" y="215.6" width="36.8" height="36.8"/><use href="#i_eraser" x="49.6" y="215.6" width="36.8" height="36.8"/><use href="#i_component" x="9.6" y="257.1" width="36.8" height="36.8"/><use href="#i_tag" x="49.6" y="257.1" width="36.8" height="36.8"/><use href="#i_pencil" x="9.6" y="302.6" width="36.8" height="36.8"/><use href="#i_freehand" x="49.6" y="302.6" width="36.8" height="36.8"/><use href="#i_rect" x="9.6" y="343.6" width="36.8" height="36.8"/><use href="#i_rotrect" x="49.6" y="343.6" width="36.8" height="36.8"/><use href="#i_circle" x="9.6" y="383.6" width="36.8" height="36.8"/><use href="#i_polygon" x="49.6" y="383.6" width="36.8" height="36.8"/><use href="#i_arc" x="9.6" y="423.1" width="36.8" height="36.8"/><use href="#i_arc3" x="49.6" y="423.1" width="36.8" height="36.8"/><use href="#i_pie" x="9.6" y="463.1" width="36.8" height="36.8"/><use href="#i_arc2" x="49.6" y="463.1" width="36.8" height="36.8"/><use href="#i_move" x="9.6" y="510.6" width="36.8" height="36.8"/><use href="#i_pushpull" x="49.6" y="510.6" width="36.8" height="36.8"/><use href="#i_rotate" x="9.6" y="551.6" width="36.8" height="36.8"/><use href="#i_followme" x="49.6" y="551.6" width="36.8" height="36.8"/><use href="#i_scale" x="9.6" y="591.6" width="36.8" height="36.8"/><use href="#i_offset" x="49.6" y="591.6" width="36.8" height="36.8"/><use href="#i_axes" x="9.6" y="631.6" width="36.8" height="36.8"/><use href="#i_flip" x="49.6" y="631.6" width="36.8" height="36.8"/><use href="#i_tape" x="9.6" y="677.1" width="36.8" height="36.8"/><use href="#i_dimension" x="49.6" y="677.1" width="36.8" height="36.8"/><use href="#i_protractor" x="9.6" y="717.6" width="36.8" height="36.8"/><use href="#i_text" x="49.6" y="717.6" width="36.8" height="36.8"/><use href="#i_section" x="9.6" y="757.6" width="36.8" height="36.8"/><use href="#i_text3d" x="49.6" y="757.6" width="36.8" height="36.8"/><use href="#i_orbit" x="9.6" y="804.6" width="36.8" height="36.8"/><use href="#i_pan" x="49.6" y="804.6" width="36.8" height="36.8"/><use href="#i_zoom" x="9.6" y="844.6" width="36.8" height="36.8"/><use href="#i_zoomwin" x="49.6" y="844.6" width="36.8" height="36.8"/><use href="#i_zoomext" x="9.6" y="885.1" width="36.8" height="36.8"/><use href="#i_prev" x="49.6" y="885.1" width="36.8" height="36.8"/><use href="#i_poscam" x="9.6" y="933.6" width="36.8" height="36.8"/><use href="#i_walk" x="49.6" y="933.6" width="36.8" height="36.8"/><use href="#i_lookaround" x="9.6" y="973.6" width="36.8" height="36.8"/><use href="#i_fov" x="49.6" y="973.6" width="36.8" height="36.8"/><rect x="14" y="297.0" width="65" height="2.6" fill="#8a8a8a"/><rect x="14" y="504.7" width="65" height="2.6" fill="#8a8a8a"/><rect x="14" y="671.7" width="65" height="2.6" fill="#8a8a8a"/><rect x="14" y="799.5" width="65" height="2.6" fill="#8a8a8a"/><rect x="14" y="926.9000000000001" width="65" height="2.6" fill="#8a8a8a"/><rect x="14" y="1014.2" width="65" height="2.6" fill="#8a8a8a"/>
<rect x="503" y="1035.5" width="14" height="14" rx="1" fill="url(#winblue)"/><rect x="518" y="1035.5" width="14" height="14" rx="1" fill="url(#winblue)"/><rect x="503" y="1050.5" width="14" height="14" rx="1" fill="url(#winblue)"/><rect x="518" y="1050.5" width="14" height="14" rx="1" fill="url(#winblue)"/><rect x="549.5" y="1030.5" width="271" height="39" rx="19.5" fill="#f9f9f9" stroke="#dedede" stroke-width="1"/><circle cx="570.5" cy="1048.5" r="7" fill="none" stroke="#222" stroke-width="2"/><path d="M575.5 1053.5 L580.5 1058.5" stroke="#222" stroke-width="2.4" stroke-linecap="round"/><text x="594" y="1057.5" font-size="17.5" fill="#555" font-family="Liberation Sans">Search</text><clipPath id="pill"><rect x="757" y="1034" width="61" height="33" rx="16.5"/></clipPath><g clip-path="url(#pill)"><rect x="757" y="1034" width="61" height="33" fill="#8a7a7a"/><rect x="786" y="1034" width="32" height="33" fill="#5aa045"/><path d="M760 1067 L775 1040 L782 1067 Z" fill="#c8c8d0"/><path d="M783 1067 L795 1045 L805 1067 Z" fill="#c07a40"/><circle cx="807" cy="1045" r="8" fill="#7ac060"/><circle cx="765" cy="1040" r="9" fill="#6a5a66"/></g><path d="M846 1036 L858 1036 Q861 1036 862 1039 L863.5 1043 L858.5 1043 Q856 1043 855 1046 L851.5 1055 L841 1055 Q838.5 1055 839.5 1051 L843 1040 Q844 1036 846 1036 Z" fill="url(#cop1)"/><path d="M858.5 1043 L867 1043 Q869.5 1043 869 1047 L865 1059 Q863.5 1063 860 1063 L848 1063 Q846 1063 845.5 1060 L844.5 1055 L851.5 1055 Q853.5 1055 854.5 1052 Z" fill="url(#cop2)"/><rect x="894" y="1038" width="29" height="26" rx="4" fill="#1f4e8c"/><path d="M902 1038 L902 1034 L915 1034 L915 1038" fill="none" stroke="#37a0e8" stroke-width="2"/><rect x="903" y="1045" width="5" height="5" fill="#f25022"/><rect x="909" y="1045" width="5" height="5" fill="#7fba00"/><rect x="903" y="1051" width="5" height="5" fill="#00a4ef"/><rect x="909" y="1051" width="5" height="5" fill="#ffb900"/><rect x="949" y="1035" width="30" height="30" rx="2" fill="#1877f2"/><path d="M967 1065 L967 1053 L971 1053 L971.6 1048.5 L967 1048.5 L967 1046 Q967 1044 969 1044 L972 1044 L972 1040 Q970 1039.5 968 1039.5 Q962 1039.5 962 1045.5 L962 1048.5 L958 1048.5 L958 1053 L962 1053 L962 1065 Z" fill="#fff"/><rect x="1006" y="1039" width="25" height="18" rx="5" fill="#f00"/><path d="M1015 1043.5 L1022 1048 L1015 1052.5 Z" fill="#fff"/><rect x="1059" y="1035" width="30" height="30" rx="1" fill="#ff4500"/><ellipse cx="1074" cy="1053" rx="9" ry="6.5" fill="#fff"/><circle cx="1070.5" cy="1052" r="1.5" fill="#ff4500"/><circle cx="1077.5" cy="1052" r="1.5" fill="#ff4500"/><circle cx="1080" cy="1041" r="2" fill="#fff"/><circle cx="1065" cy="1047" r="2.5" fill="#fff"/><circle cx="1083" cy="1047" r="2.5" fill="#fff"/><path d="M1129 1050 L1116 1042.5 A15 15 0 0 1 1142 1042.5 Z" fill="#db4437"/><path d="M1129 1050 L1142 1042.5 A15 15 0 0 1 1129 1065 Z" fill="#fcc934"/><path d="M1129 1050 L1129 1065 A15 15 0 0 1 1116 1042.5 Z" fill="#1e9e4a"/><circle cx="1129" cy="1050" r="6.8" fill="#fff"/><circle cx="1129" cy="1050" r="5.3" fill="#4285f4"/><circle cx="1184" cy="1050" r="14.8" fill="url(#edgeg)"/><path d="M1169.3 1051 Q1170 1066 1187 1065.5 Q1195 1065 1199 1058 Q1190 1062 1182 1058.5 Q1174.5 1054.5 1177 1047.5 Q1172 1048 1169.3 1051 Z" fill="#1560bd"/><ellipse cx="1184.5" cy="1049.5" rx="4.6" ry="3.6" fill="#eeeeee"/><circle cx="1176.5" cy="1057.5" r="6.3" fill="#d4d4d4"/><circle cx="1176.5" cy="1055.5" r="2.2" fill="#8a8a8a"/><path d="M1172.5 1062 Q1172.5 1058.5 1176.5 1058.5 Q1180.5 1058.5 1180.5 1062 Z" fill="#8a8a8a"/><rect x="1225" y="1036" width="28" height="27" rx="4" fill="#001e36"/><text x="1229" y="1056" font-size="15" font-weight="bold" fill="#31a8ff" font-family="Liberation Sans">Ps</text><path d="M1279 1038.5 Q1279 1037 1280.5 1037 L1289.5 1037 L1292.5 1040 L1307 1040 Q1308.5 1040 1308.5 1041.5 L1308.5 1046 L1279 1046 Z" fill="#e2a910"/><rect x="1279" y="1041.5" width="29.5" height="22.5" rx="1" fill="#fcc83c"/><path d="M1285 1064 L1285 1058 Q1285 1056 1287 1056 L1302 1056 Q1304 1056 1304 1058 L1304 1064 Z" fill="#1b7fd6"/><rect x="1288" y="1058.5" width="13" height="1.2" fill="#0a4c95"/><rect x="1324" y="1025" width="50" height="49" rx="5" fill="#e8b0ab"/><rect x="1329" y="1070" width="40" height="4" rx="2" fill="#c42b1c"/><rect x="1334.5" y="1035.5" width="29" height="29" fill="#f4f4f8" stroke="#6a9fcf" stroke-width="1"/><g transform="translate(1338 1039) scale(1.05)" fill="none" stroke="#0f5a9a" stroke-width="1.9" stroke-linejoin="round" stroke-linecap="round"><path d="M2.5 6.5 L10.5 2 L18.5 6.5 L18.5 13.5 Q18 15 16 16.5 L11 19"/><path d="M6.5 6.8 Q8 5.2 11 6 L15 8.3 L15 13 Q14.5 14.5 13 15.5 L11 16.5"/><path d="M1.5 10 L9.5 14 L9.5 19.5 M10.5 9.5 L10.5 19.5 M3 14 L8.5 17 M2 16.8 L8.5 20" /><path d="M2.5 6.5 L10.5 10.5" /></g><rect x="1380.5" y="1025.5" width="48" height="48" rx="5" fill="#f7f7f7" stroke="#e2e2e2" stroke-width="1"/><rect x="1394" y="1070" width="20" height="4" rx="2" fill="#0a6ed1"/><rect x="1389.5" y="1035.5" width="29" height="29" fill="#f0f0f4" stroke="#6a9fcf" stroke-width="1"/><g transform="translate(1393 1039) scale(1.05)" fill="none" stroke="#0f5a9a" stroke-width="1.9" stroke-linejoin="round" stroke-linecap="round"><path d="M2.5 6.5 L10.5 2 L18.5 6.5 L18.5 13.5 Q18 15 16 16.5 L11 19"/><path d="M6.5 6.8 Q8 5.2 11 6 L15 8.3 L15 13 Q14.5 14.5 13 15.5 L11 16.5"/><path d="M1.5 10 L9.5 14 L9.5 19.5 M10.5 9.5 L10.5 19.5 M3 14 L8.5 17 M2 16.8 L8.5 20" /><path d="M2.5 6.5 L10.5 10.5" /></g><path d="M1682 1054 L1688 1048 L1694 1054" fill="none" stroke="#222" stroke-width="1.6"/><path d="M1718 1045 Q1728 1036 1738 1045 M1721 1048.5 Q1728 1042 1735 1048.5 M1724 1052 Q1728 1048 1732 1052" fill="none" stroke="#222" stroke-width="1.6"/><circle cx="1728" cy="1055" r="1.6" fill="#222"/><path d="M1749 1047 L1752 1047 L1756.5 1043.5 L1756.5 1056.5 L1752 1053 L1749 1053 Z" fill="none" stroke="#222" stroke-width="1.5" stroke-linejoin="round"/><path d="M1759.5 1047 Q1761.5 1050 1759.5 1053 M1762.5 1045 Q1766 1050 1762.5 1055" fill="none" stroke="#222" stroke-width="1.4"/><path d="M1765.5 1043 Q1770 1050 1765.5 1057" fill="none" stroke="#bbb" stroke-width="1"/><rect x="1778.5" y="1044.5" width="17" height="11" rx="2" fill="none" stroke="#222" stroke-width="1.4"/><rect x="1782" y="1047" width="11" height="6" fill="#222"/><rect x="1796" y="1048" width="2" height="4" fill="#222"/><path d="M1781 1041 L1779 1047 L1782 1047 L1780.5 1051" fill="none" stroke="#222" stroke-width="1.2"/><text x="1895" y="1045" font-size="15" fill="#1a1a1a" font-family="Liberation Sans" text-anchor="end">7:19 PM</text><text x="1895" y="1065" font-size="15" fill="#1a1a1a" font-family="Liberation Sans" text-anchor="end">10/13/2025</text>
</svg>
</body></html>
